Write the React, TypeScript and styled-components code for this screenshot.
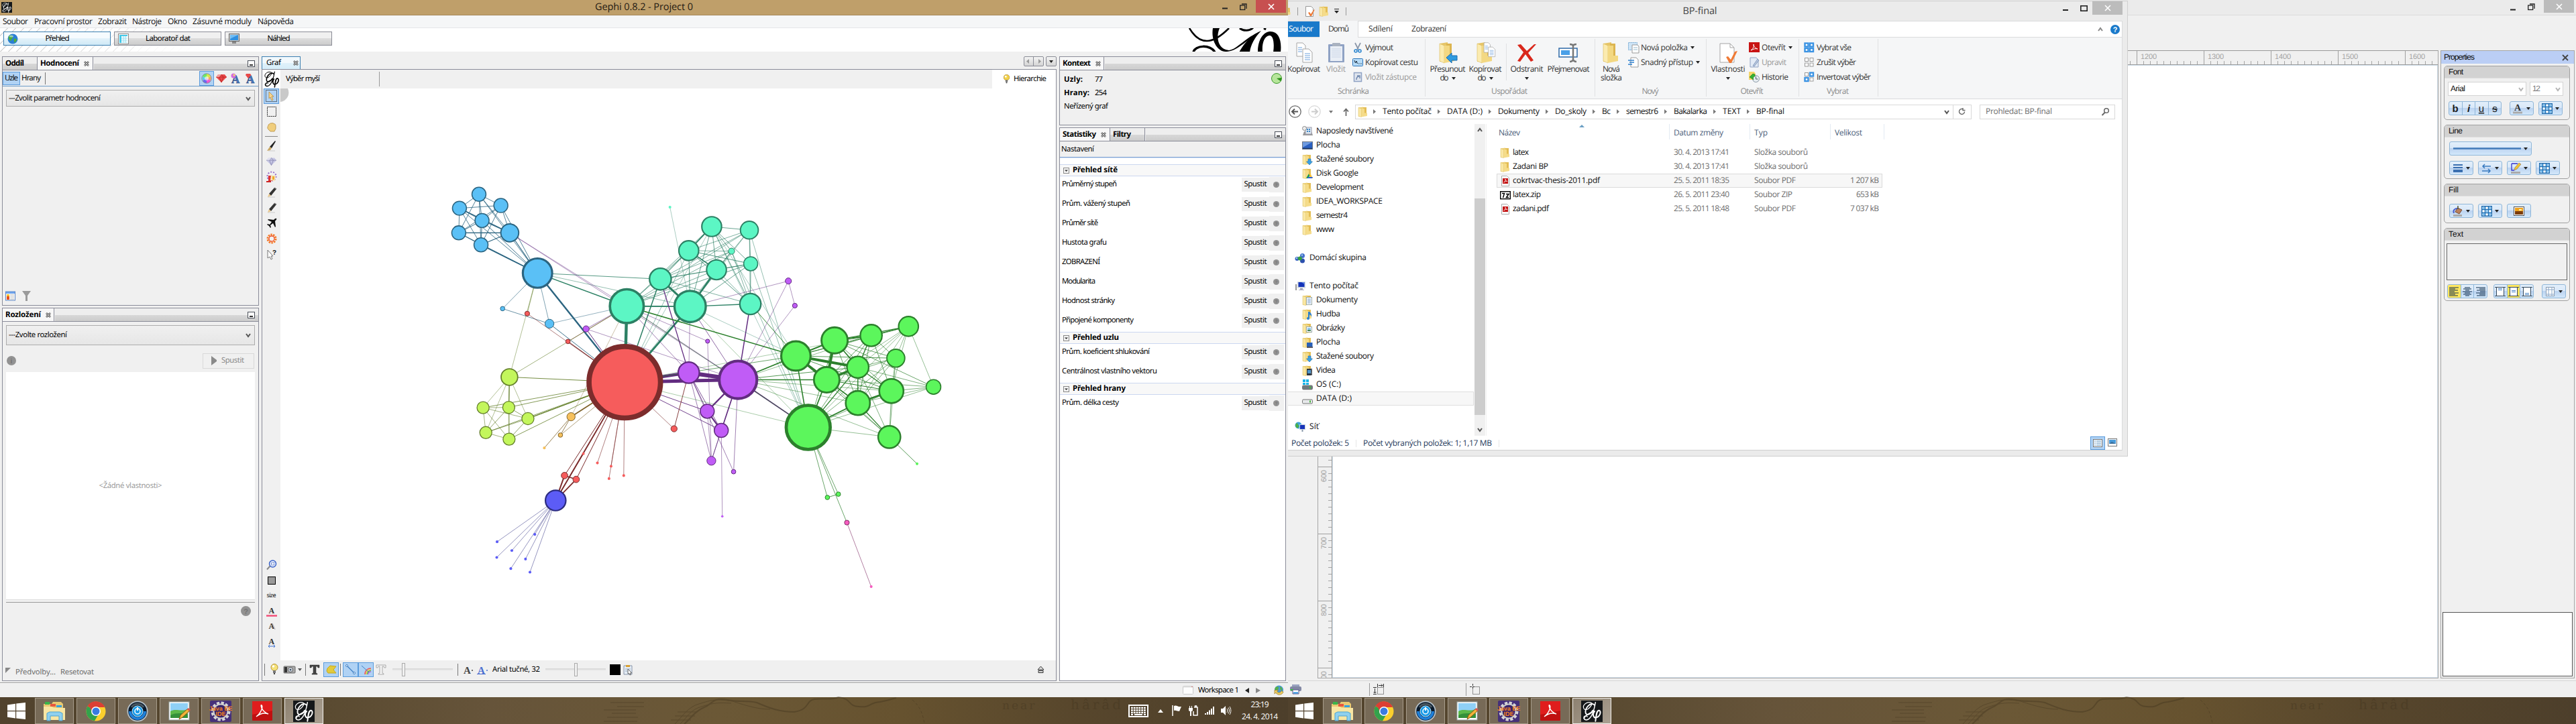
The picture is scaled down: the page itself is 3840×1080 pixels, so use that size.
import React, { useLayoutEffect, useRef, useState, ReactNode } from "react";
import styled, { createGlobalStyle, css } from "styled-components";

const TAHOMA = '"Noto Sans", "DejaVu Sans", sans-serif';
const SEGOE = '"Open Sans", "Noto Sans", sans-serif';
const ARIAL = '"Liberation Sans", Arial, sans-serif';

const Global = createGlobalStyle`
  * { box-sizing: border-box; }
  html, body { margin: 0; padding: 0; background: #f0f0f0; }
  body { width: 3840px; height: 1080px; overflow: hidden; font-family: ${SEGOE}; text-rendering: geometricPrecision; }
`;

/* ---------- text ---------- */

const LabelBox = styled.span<{ $c: string; $s: number; $f: string; $b?: boolean; $l: number; $w?: number }>`
  display: block;
  flex: none;
  white-space: pre;
  color: ${(p) => p.$c};
  font: ${(p) => (p.$b ? 700 : 400)} ${(p) => p.$s}px/1.2 ${(p) => p.$f};
  margin-left: ${(p) => p.$l}px;
  ${(p) => p.$w !== undefined && css`width: ${p.$w}px;`}
`;

type LabelProps = { children: string; w?: number; c?: string; s?: number; f?: string; b?: boolean; l?: number };

/* Tracks the text so that it fills the width it is given. */
function Label({ children, w, c = "#0c0c0c", s = 12, f = SEGOE, b, l = 0 }: LabelProps) {
  const ref = useRef<HTMLSpanElement>(null);
  const [spacing, setSpacing] = useState(0);
  useLayoutEffect(() => {
    const el = ref.current;
    if (!el || w === undefined || children.length < 2) return;
    const range = document.createRange();
    range.selectNodeContents(el);
    setSpacing((w - range.getBoundingClientRect().width) / (children.length - 1));
  }, []);
  return (
    <LabelBox ref={ref} $c={c} $s={s} $f={f} $b={b} $l={l} $w={w} style={{ letterSpacing: spacing }}>
      {children}
    </LabelBox>
  );
}

const Tah = (p: LabelProps) => <Label f={TAHOMA} s={11.3} c="#000" {...p} />;

/* ---------- icons ---------- */

const Svg = styled.svg<{ $l?: number | string }>`
  display: block;
  flex: none;
  margin-left: ${(p) => (typeof p.$l === "string" ? p.$l : `${p.$l || 0}px`)};
  overflow: visible;
`;

function Icon({ w = 16, h = 16, vb, l, children }: { w?: number; h?: number; vb?: string; l?: number | string; children: ReactNode }) {
  return (
    <Svg width={w} height={h} viewBox={vb || `0 0 ${w} ${h}`} $l={l} fill="none">
      {children}
    </Svg>
  );
}

const Script = ({ c }: { c: string }) => (
  <g stroke={c} strokeLinecap="round" fill="none">
    <path strokeWidth=".9" d="M12 3C7 0 1 5 3 9c2 3 7 0 9-5M4 21c-3-3 1-5 3-3" />
    <path strokeWidth="1.4" d="M15 5C10 1 4 9 5 14c1 3 5 2 8-3" />
    <path strokeWidth="1.1" d="M16 2c-1 6-3 16-8 19-2 1-4 1-5-1 2-4 8-7 12-8" />
    <path strokeWidth="1.5" d="M15 12c-3 4-1 8 2 7 4-1 6-7 3-8-3 0-3 6-4 12" />
  </g>
);

const GephiIcon = ({ s = 16 }: { s?: number }) => (
  <Icon w={s} h={s} vb="0 0 24 24">
    <rect width="24" height="24" fill="#15181a" />
    <Script c="#fff" />
  </Icon>
);

const Close = ({ l }: { l?: number }) => (
  <Icon w={8} h={8} l={l}>
    <path d="M1 1l6 6M7 1L1 7" stroke="#555" strokeWidth="2.6" />
    <path d="M1 1l6 6M7 1L1 7" stroke="#ddd" strokeWidth=".9" />
  </Icon>
);

const Minimize = () => (
  <Icon w={11} h={10}>
    <rect x=".5" y=".5" width="10" height="9" fill="#fff" stroke="#4a4f58" />
    <path d="M3 7h5" stroke="#333" strokeWidth="2" />
  </Icon>
);

const Chevron = ({ c = "#555", up, l }: { c?: string; up?: boolean; l?: number }) => (
  <Icon w={8} h={6} l={l}>
    <path d={up ? "M1 5l3-4 3 4" : "M1 1l3 4 3-4"} stroke={c} strokeWidth="2" />
  </Icon>
);

const Caret = ({ c = "#222", l, w = 6 }: { c?: string; l?: number; w?: number }) => (
  <Icon w={w} h={4} vb="0 0 6 4" l={l}>
    <path d="M0 0h6L3 4z" fill={c} />
  </Icon>
);

const Bulb = ({ c = "#f5e27a", w = 12, h = 17 }: { c?: string; w?: number; h?: number }) => (
  <Icon w={w} h={h} vb="0 0 12 17">
    <circle cx="6" cy="5.5" r="5" fill={c} stroke="#b8952e" />
    <path d="M4 10h4v4H4z" fill="#777" />
    <path d="M5 15h2" stroke="#444" strokeWidth="2" />
    <circle cx="4.5" cy="4" r="1.7" fill="#fff" />
  </Icon>
);

const HelpDot = ({ s = 15, t = "?" }: { s?: number; t?: string }) => (
  <Icon w={s} h={s} vb="0 0 15 15">
    <circle cx="7.5" cy="7.5" r="7.5" fill="#929292" />
    <text x="7.5" y="11.5" fontSize="11" fontWeight="700" textAnchor="middle" fill="#747474" fontFamily="Liberation Sans, sans-serif">{t}</text>
  </Icon>
);

const folderShape = (
  <>
    <path d="M1 1.500l7-1v14H1z" fill="#edcf73" />
    <path d="M8 1h5v13H8z" fill="#e3bd55" />
    <path d="M1 1.500l4.500 1.500v12.500L1 14.500z" fill="#f9e7a5" stroke="#d9b957" strokeWidth=".5" />
    <path d="M5.500 3H10v6.500h4V14l-8.500 1.500z" fill="#f5dc8a" />
  </>
);

function Folder({ kind, l, w = 16 }: { kind?: string; l?: number; w?: number }) {
  return (
    <Icon w={w} h={16} vb="0 0 16 16" l={l}>
      {folderShape}
      {kind === "down" && <path d="M9 7h4v4h2.500L11 16l-4.500-5H9z" fill="#3aa0e6" stroke="#1c6fb5" strokeWidth=".6" />}
      {kind === "drive" && <><path d="M10 8l-4 7h3l3-5z" fill="#159957" /><path d="M10 8h2l4 7h-3z" fill="#fbc02d" /><path d="M8 15h7l1-2H9z" fill="#2d62d6" /></>}
      {kind === "doc" && <><rect x="6.500" y="3.500" width="8" height="11" fill="#fff" stroke="#9aa" /><path d="M8 6h5M8 8h5M8 10h5M8 12h5" stroke="#7aa0cf" /></>}
      {kind === "music" && <path d="M9 4v8a2 2 0 1 0 2 2V8c2 1 3 2 2 4 3-3 0-6-2-8z" fill="#2b80d0" />}
      {kind === "image" && <><rect x="6.500" y="5.500" width="8" height="8" fill="#fff" stroke="#9aa" /><path d="M8 7h5v3H8z" fill="#8fc7ee" /><path d="M8 10h5v2H8z" fill="#49845b" /></>}
      {kind === "desk" && <><rect x="7" y="8" width="8.500" height="6" fill="#2860b8" /><path d="M7 15h9" stroke="#223" strokeWidth="1.500" /></>}
      {kind === "video" && <><rect x="7" y="5" width="8" height="10" fill="#2b3440" /><path d="M8 7h5v5H8z" fill="#4b94c9" /><path d="M14 6v9" stroke="#ddd" strokeDasharray="1 1" /></>}
    </Icon>
  );
}

const Pdf = () => (
  <Icon>
    <path d="M2.500.5h8l3 3v12h-11z" fill="#fff" stroke="#aaa" />
    <rect x="4" y="4" width="8" height="8" fill="#c31414" />
    <path d="M5.500 10c3-1 3-5 2.500-5s1 4 3 3.500c-2-.5-3 0-5.500 1.500z" stroke="#fff" strokeWidth=".7" />
  </Icon>
);

const Zip = () => (
  <Icon>
    <rect x=".7" y="2.700" width="14.600" height="11" fill="#fff" stroke="#000" strokeWidth="1.400" />
    <path d="M3 5.500h3.500L4.500 12M9 6.500h4l-3.500 5H13" stroke="#000" strokeWidth="1.500" />
  </Icon>
);

const Computer = () => (
  <Icon>
    <path d="M1 5h2v9H1z" fill="#999" />
    <rect x="4" y="1" width="12" height="10" fill="#d4dbe2" />
    <rect x="5.500" y="2" width="9" height="7" fill="#1534b8" />
    <path d="M10 2h4.500v3z" fill="#5d86e8" />
    <path d="M8 11h4v2h2v1H6v-1h2z" fill="#aab" />
  </Icon>
);

const Drive = ({ win }: { win?: boolean }) => (
  <Icon>
    {win && <path d="M1 0h4v4H1zM6 0h4v4H6zM1 5h4v3H1zM6 5h4v3H6z" fill="#19b5ea" />}
    <rect x=".5" y={9} width="15" height="6" rx="1.500" fill={win ? "#6e7a80" : "#e6e8ea"} stroke="#777" />
    <rect x="11" y="10.500" width="2" height="3" fill="#46b83e" />
  </Icon>
);

const navIcons: Record<string, ReactNode> = {
  recent: <Icon><path d="M3 8h11l2 6H1z" fill="#999" /><rect x="5" y="2" width="9" height="10" fill="#dfe8ef" stroke="#99a" /><path d="M7 5h2M10 5h2M7 8h2M10 8h2" stroke="#3b86c9" strokeWidth="2" /><circle cx="3.500" cy="3.500" r="3" fill="#eee" stroke="#888" /></Icon>,
  desktop: <Icon><rect x=".5" y="2.500" width="15" height="11" fill="#2b60c0" stroke="#6b7686" /><path d="M1 3h14L1 11z" fill="#6d9ae0" /><path d="M1 12.500h14" stroke="#223c6a" strokeWidth="1.500" /></Icon>,
  group: <Icon><circle cx="3.500" cy="9" r="3" fill="#3b64c4" /><circle cx="11.500" cy="4.500" r="3.500" fill="#4571ce" /><circle cx="11.500" cy="12" r="3.500" fill="#2c50ae" /><circle cx="7.800" cy="8.500" r="3" fill="#36a03d" /><circle cx="3" cy="8" r="1" fill="#cfe" /><circle cx="11" cy="3.500" r="1" fill="#cfe" /></Icon>,
  pc: <Computer />,
  net: <Icon><circle cx="5.500" cy="5.500" r="5" fill="#3da3d9" /><path d="M3 2c3 1 1 4 4 4L4 10C1 8 0 5 3 2z" fill="#4db045" /><rect x="7" y="4" width="9" height="8" fill="#c8d2de" /><rect x="8" y="5" width="7" height="6" fill="#1834b8" /><path d="M10.500 12h2v3h-2z" fill="#89a" /></Icon>,
  osdrive: <Drive win />,
  data: <Drive />,
};

/* ---------- network graph ---------- */

const palette: Record<string, [string, string]> = {
  b: ["#5ac0f6", "#2b6480"], t: ["#5cf6c4", "#2c8064"], v: ["#c05cf6", "#622c80"], r: ["#f65c5c", "#7c2c2c"],
  g: ["#5cf65c", "#2c802c"], l: ["#c3f65c", "#65802c"], o: ["#f6c05c", "#80642c"], i: ["#5c5cf6", "#2c2c80"], k: ["#f65cc0", "#802c64"],
};

type N = [string, number, number, number, string];
const nodes: N[] = [
  ["b1", 145, 122, 22, "b"], ["b2", 88, 173, 22, "b"], ["b3", 209, 163, 22, "b"], ["b4", 154, 218, 22, "b"], ["b5", 86, 263, 22, "b"],
  ["b6", 235, 263, 28, "b"], ["b7", 151, 307, 22, "b"], ["B", 316, 410, 46, "b"], ["b8", 214, 540, 7.5, "b"], ["b9", 351, 595, 14, "b"],
  ["t0", 703, 169, 4, "t"], ["t1", 825, 240, 31, "t"], ["t2", 935, 253, 28, "t"], ["t3", 758, 328, 31, "t"], ["t4", 883, 330, 10, "t"],
  ["t5", 939, 376, 22, "t"], ["t6", 839, 398, 31, "t"], ["t7", 675, 432, 34, "t"], ["T1", 577, 531, 53, "t"], ["T2", 762, 532, 49, "t"], ["t8", 938, 523, 33, "t"],
  ["v1", 1049, 439, 10, "v"], ["v2", 1068, 529, 8, "v"], ["v3", 813, 659, 7, "v"], ["v4", 458, 614, 10, "v"], ["v5", 758, 774, 33, "v"],
  ["V", 902, 800, 59, "v"], ["v6", 812, 915, 22, "v"], ["v7", 853, 985, 22, "v"], ["v8", 824, 1096, 14, "v"], ["v9", 889, 1136, 7.5, "v"], ["v10", 856, 1299, 3.5, "v"],
  ["R", 571, 809, 112, "r"], ["r1", 286, 558, 8, "r"], ["r2", 405, 660, 7.5, "r"], ["r3", 715, 979, 10, "r"], ["r4", 450, 1070, 4, "r"],
  ["r5", 395, 1150, 10.5, "r"], ["r6", 429, 1164, 10.5, "r"], ["r7", 491, 1104, 4, "r"], ["r8", 531, 1116, 4, "r"], ["r9", 525, 1161, 4, "r"], ["r10", 568, 1150, 4, "r"],
  ["l1", 234, 790, 26, "l"], ["l2", 157, 902, 19, "l"], ["l3", 232, 901, 19, "l"], ["l4", 288, 942, 19, "l"], ["l5", 165, 993, 19, "l"], ["l6", 233, 1017, 19, "l"],
  ["o1", 414, 935, 13, "o"], ["o2", 383, 1002, 7.5, "o"], ["o3", 336, 1049, 4, "o"],
  ["I", 369, 1241, 32, "i"], ["i1", 198, 1392, 4, "i"], ["i2", 308, 1365, 4, "i"], ["i3", 241, 1424, 4, "i"], ["i4", 197, 1449, 4, "i"],
  ["i5", 281, 1455, 4, "i"], ["i6", 238, 1490, 4, "i"], ["i7", 294, 1503, 4, "i"],
  ["g1", 1071, 713, 46, "g"], ["g2", 1184, 656, 41, "g"], ["g3", 1291, 638, 34, "g"], ["g4", 1400, 605, 31, "g"], ["g5", 1363, 721, 28, "g"],
  ["g6", 1252, 754, 34, "g"], ["g7", 1161, 800, 40, "g"], ["g8", 1350, 841, 38, "g"], ["g9", 1473, 826, 23, "g"], ["g10", 1252, 885, 38, "g"],
  ["G", 1107, 974, 69, "g"], ["g11", 1344, 1009, 35, "g"], ["g12", 1425, 1107, 4, "g"], ["g13", 1163, 1230, 7.5, "g"], ["g14", 1195, 1218, 7.5, "g"],
  ["k1", 1220, 1322, 8, "k"], ["k2", 1291, 1556, 4, "k"],
];

const byId = Object.fromEntries(nodes.map((n) => [n[0], n]));
const gx = (x: number) => 222 + x / 1.96;
const gy = (y: number) => 108 + y / 2.45;

/* "source target,target…:width:colour" */
const edgeSpec = [
  "b1 b2,b3,b4,b5,b6,b7,B:.8:b", "b2 b3,b4,b5,b6,b7,B:.8:b", "b3 b4,b5,b6,b7,B:.8:b", "b4 b5,b6,b7,B:.9:b", "b5 b6,b7,B:.9:b", "b6 b7,B:1.1:b", "b7 B:1.6:b", "b2 b6:1.3:b", "b5 b6:1.3:b",
  "B R:2.4:b", "B T1:1.5:t", "B t7:.8:t", "B T2:.5:t", "B b8,b9:.6:b", "b8 b9:.7:b", "b9 R:.9:b", "b9 T1:.5:b", "B r1:.6:l", "B l1:.5:l",
  "b6 T1:.5:v", "b6 V:.5:v", "r1 R:.6:r", "r2 R:1.1:r", "r2 T1:.6:r", "l1 T1:.6:l", "v4 R:1:v", "v4 T1:.6:v", "v4 V:.5:v",
  "t0 T2:.4:t", "t1 t2,t3,t4,t5,t6,t7,T2,T1,t8:.7:t", "t2 t3,t5,t6,t7,T2,t8,T1:.6:t", "t3 t5,t6,t7,T2,T1,t8:.8:t", "t4 t6,t7,T2,T1,t3,t8:.6:t",
  "t5 t6,t7,T2,t8,T1:.7:t", "t6 t7,T1,t8:.6:t", "t6 T2:2.6:t", "t7 T2:3:t", "t7 t8:.6:t", "T1 T2:1.8:t", "T2 t8:1.4:t", "t3 t6:1.4:t", "t3 t1:1.6:t",
  "T1 R:4.4:t", "T2 R:2.8:t", "t7 R:1.5:t", "t3 R:.5:t", "t6 R:.5:t", "t1 R:.4:t", "t8 V:1.5:v", "t7 v5:1.3:v", "T1 V:.6:v", "T1 v5:.6:v", "T2 V:.7:v", "T2 v5:.5:v",
  "T1 g1:1.5:g", "T1 G:.5:g", "T2 G:.4:g", "t1 g1:.4:t", "t2 G:.5:t", "t5 G:.5:t", "t4 G:.5:t", "t8 g1:.9:g", "T2 g1:.4:t", "t1 G:.4:t",
  "v1 T2,v2,V:.5:v", "v2 V:.5:v", "v3 T1,v8:.5:v",
  "R V:5:v", "R v5:4.5:v", "v5 V:6:v", "R v6:.9:v", "R v7:.9:v", "v5 v6,v7:.8:v", "v5 v8:.6:v", "v5 v9:.6:v", "v6 V:2.4:v", "v6 v7:2.2:v", "v7 V:1.6:v", "v6 v8:.5:v", "v7 v8:.8:v", "v9 V:.6:v", "v7 v10:.5:v", "V v8:.5:v", "V G:1.6:v",
  "v5 r3:.9:r", "R r3:.6:r",
  "R l1:.9:l", "R l2,l3,l4,l5,l6:.8:l", "R l4:1.3:l", "l1 l2,l3,l4,l5,l6:.5:l", "l1 l3:.9:l", "l2 l3,l4,l5,l6:.6:l", "l3 l4,l5,l6:.7:l", "l4 l5,l6:.7:l", "l5 l6:.6:l",
  "R o1:1.8:o", "R o2:.6:o", "o1 o2:.8:o", "o1 o3:.8:o", "T1 o1:.4:o",
  "R r4,r7,r8,r9,r10:.6:r", "R r5,r6:1:r", "R I:1.8:r", "r5 r6:1.6:r", "r5 I:2:r", "r6 I:1.8:r", "r4 I:1.2:r",
  "I i1,i2,i3,i4,i5,i6,i7:.5:i",
  "V g1:1.6:g", "V g2,g3:.5:g", "V g6:.8:g", "V g7:1.6:g", "V g10,g11,g8:.5:g", "V G:.6:g", "R g1:.7:g", "R g3:.4:g", "R G:.4:g",
  "g1 g2:2:g", "g1 g6:4:g", "g1 g7:3.6:g", "g1 g3,g4,g5,g8,g10,g11:.8:g", "g1 G:1.6:g",
  "g2 g3:2.2:g", "g2 g4:1.2:g", "g2 g6:1.6:g", "g2 g7:4:g", "g2 g5,g8,g9,g10,G:.7:g", "g3 g4:1.4:g", "g3 g5,g7,g8,g10,G:.7:g", "g3 g6:1.4:g",
  "g4 g5,g6,g7,g8,g9,g10,G:.5:g", "g5 g6,g7,g8,g10,G,g11:.6:g", "g6 g7:3.4:g", "g6 g8:1.2:g", "g6 g10:1.4:g", "g6 g9,g11:.6:g", "g6 G:1.3:g",
  "g7 g8:1:g", "g7 g10:1.6:g", "g7 G:1.8:g", "g7 g9,g11:.6:g", "g8 g9,g11,G:.6:g", "g8 g10:2.6:g", "g9 g10,G:.5:g", "g10 G:1.8:g", "g10 g11:1.2:g", "G g11:.5:g",
  "g11 g12:.8:g", "G g13:.7:g", "G g14:.7:g", "G k1:.7:g", "g13 g14:.8:g", "k1 k2:.6:k",
];

const edges = edgeSpec.flatMap((line) => {
  const [pair, width, colour] = line.split(":");
  const [from, targets] = pair.split(" ");
  return targets.split(",").map((to) => ({ from: byId[from], to: byId[to], width: Number(width), colour: palette[colour][1] }));
});

const Graph = () => (
  <Svg width={1156} height={853} viewBox="0 0 1156 853" fill="none">
    <path d="M0 0h11a14 14 0 0 1-11 20z" fill="#c9c9c9" />
    {edges.map((e, i) => (
      <line key={i} x1={gx(e.from[1])} y1={gy(e.from[2])} x2={gx(e.to[1])} y2={gy(e.to[2])} stroke={e.colour} strokeWidth={e.width} />
    ))}
    {nodes.map(([id, x, y, r, c]) => {
      const outer = r / 1.96;
      const sw = outer < 3 ? 0 : Math.max(1, outer * 0.135);
      return <circle key={id} cx={gx(x)} cy={gy(y)} r={outer - sw / 2} fill={palette[c][0]} stroke={palette[c][1]} strokeWidth={sw} />;
    })}
  </Svg>
);

/* ---------- shared frame ---------- */

const Desktop = styled.div`
  display: grid;
  grid-template-columns: 1920px 1920px;
  width: 3840px;
  height: 1080px;
  overflow: hidden;
`;
const Monitor = styled.div`
  position: relative;
  display: flex;
  flex-direction: column;
  height: 1080px;
  overflow: hidden;
`;
const Bar = styled.div`
  position: relative;
  display: flex;
  flex: none;
  align-items: center;
  height: 40px;
  background: linear-gradient(90deg, #51422d 0, #57482f 22%, #66543a 38%, #6b5836 56%, #66522f 70%, #57462c 84%, #4d3f2b 100%);
`;
const BarMap = styled.div`
  position: absolute;
  inset: 0;
  pointer-events: none;
`;
const TaskButton = styled.div<{ $active?: boolean }>`
  position: relative;
  display: flex;
  align-items: center;
  justify-content: center;
  width: 58px;
  height: 39px;
  margin: 1px 4px 0 0;
  border: 1px solid ${(p) => (p.$active ? "#f4f2ee" : "#a79c8b")};
  background: ${(p) => (p.$active ? "linear-gradient(135deg,#8d8170,#aaa092)" : "#776a57")};
`;
const Start = styled.div`
  position: relative;
  width: 52px;
  padding-left: 11px;
`;
const Tray = styled.div`
  position: relative;
  display: flex;
  align-items: center;
  margin-left: auto;
  width: 238px;
  height: 40px;
`;
const Clock = styled.div`
  display: flex;
  flex-direction: column;
  align-items: center;
  gap: 3px;
  width: 56px;
  margin-left: 15px;
`;

const taskIcons: ReactNode[] = [
  <Icon w={34} h={32}><path d="M1 5h12l2-3h12l3 3v23H1z" fill="#e9c971" /><path d="M3 2h7v4H3z" fill="#3bb54a" /><path d="M11 5h8v4h-8z" fill="#e6573f" /><path d="M20 7h8v3h-8z" fill="#35a0e0" /><path d="M1 9h12l3 2h17v18H1z" fill="#f8e6a3" /><path d="M6 30V19l4-2h15l4 2v11h-5v-7H11v7z" fill="#8fd0ee" stroke="#4ca3d0" /></Icon>,
  <Icon w={30} h={30}><circle cx="15" cy="15" r="14.500" fill="#fbcf2d" /><path d="M15 15L2.500 7.500A14.500 14.500 0 0 1 28 8.500H15z" fill="#dc3f34" /><path d="M15 15L2.500 7.500A14.500 14.500 0 0 0 13 29.300l6-10z" fill="#33a24c" /><path d="M4 5l6 13 5-9h13A14.500 14.500 0 0 0 4 5z" fill="#dc3f34" /><circle cx="15" cy="15" r="7" fill="#fff" /><circle cx="15" cy="15" r="5.500" fill="#3a7be0" /></Icon>,
  <Icon w={32} h={32}><circle cx="16" cy="16" r="15.500" fill="#b8c4cc" /><circle cx="16" cy="16" r="13.800" fill="#0a1a2c" /><path d="M5 16a11 11 0 0 0 22 0" stroke="#1e7fd8" strokeWidth="4" /><path d="M7 10a11 11 0 0 1 18 0" stroke="#48565f" strokeWidth="3" /><circle cx="16" cy="16" r="8" fill="#1b9ae6" stroke="#bfe9ff" /><circle cx="16" cy="16" r="4" stroke="#fff" strokeWidth="1.500" /><path d="M16 10v5" stroke="#fff" strokeWidth="2" /></Icon>,
  <Icon w={32} h={30}><rect x="1" y="1" width="30" height="27" fill="#fff" stroke="#9aa" /><path d="M3 3h26v13H3z" fill="#8fd0f6" /><path d="M3 15c8-5 14 1 26-3v13H3z" fill="#5cb84a" /><path d="M3 21c8-4 16-3 26-2v6H3z" fill="#35913a" /><path d="M16 27l2-6 11-10 3 3-11 10z" fill="#f3b43a" stroke="#8b5a14" /><path d="M28 12l2-2 3 3-2 2z" fill="#d9534f" /></Icon>,
  <Icon w={32} h={32}><rect width="32" height="32" rx="2" fill="#45307a" /><circle cx="16" cy="16" r="12" stroke="#d6d6d6" strokeWidth="5" strokeDasharray="4 2.300" /><circle cx="16" cy="16" r="10.500" fill="#39246b" stroke="#ccc" strokeWidth="2" /><text x="16" y="15" fontSize="9" fontWeight="700" textAnchor="middle" fill="#f58220" fontFamily="Liberation Sans, sans-serif">Java EE</text><text x="16" y="23" fontSize="9" fontWeight="700" textAnchor="middle" fill="#f58220" fontFamily="Liberation Sans, sans-serif">IDE</text></Icon>,
  <Icon w={30} h={30}><rect width="30" height="29" rx="1" fill="#c01010" /><path d="M0 0h30v14L0 20z" fill="#e01d1d" /><path d="M6 23C14 17 16 8 14 6s-1 9 10 13c-6-2-13 0-18 4z" stroke="#fff" strokeWidth="1.500" /></Icon>,
  <GephiIcon s={32} />,
];

const trayIcon = {
  keyboard: <Icon w={30} h={19}><rect x="1" y="1" width="28" height="17" fill="#4d3f2b" stroke="#fff" strokeWidth="2" /><path d="M4 5h22M4 8.500h22M4 12h22" stroke="#fff" strokeWidth="2.300" strokeDasharray="2.800 1" /><path d="M4 15h3M9 15h12M23 15h3" stroke="#fff" strokeWidth="2" /></Icon>,
  up: <Icon w={8} h={5} l={14}><path d="M0 5l4-5 4 5z" fill="#fff" /></Icon>,
  flag: <Icon w={15} h={16} l={13}><path d="M1 0v16" stroke="#fff" strokeWidth="1.500" /><path d="M3 1c4-2 5 2 11 1l-3 7c-3 0-5-2-8-1z" fill="#fff" /></Icon>,
  battery: <Icon w={14} h={16} l={10}><path d="M0 4h6v3c0 2-2 2-2 2v7H2V9S0 9 0 7zM1 1h1v3H1zM4 1h1v3H4z" fill="#fff" /><path d="M8 3h5v12H7V9M9.500 3V1h2v2" stroke="#fff" strokeWidth="1.500" /></Icon>,
  signal: <Icon w={16} h={13} l={9}><path d="M1 10h2v2H1zM4 8h2v4H4zM7 5.500h2V12H7zM10 3h2v9h-2zM13 0h2v12h-2z" fill="#fff" /></Icon>,
  sound: <Icon w={15} h={14} l={9}><path d="M0 4h3l4-4v14l-4-4H0z" fill="#fff" /><path d="M9 4c1 2 1 4 0 6M11 2.500c2 3 2 6 0 9M13 1c2.500 4 2.500 8 0 12" stroke="#fff" /></Icon>,
};

function Taskbar({ tray }: { tray?: boolean }) {
  return (
    <Bar>
      <BarMap>
        <Svg width={1920} height={40} viewBox="0 0 1920 40" fill="none" stroke="#43351f" opacity=".42">
          <path d="M1020 40c10-8 14-18 28-24 16-6 12-16 36-12 20 4 26 0 44 4 18 8 34 14 56 14 24-4 16-16 30-19 16-2 24 2 36-3 20 2 14 14 30 14 20 2 14-6 32-7 12-2 16-4 24-6" strokeWidth="2" />
          <path d="M1006 40c10-10 20-26 36-30 20-6 24-8 50-4 24 8 40 12 56 12M1014 40c10-10 16-22 32-26 18-6 26-6 44-5" />
          <path d="M910 8h50M920 14h40M900 19h48M912 24h36M905 30h46M900 36h50M1010 22h30M1006 28h30M1000 34h30" />
          <path d="M1360 4c12 10 16 22 18 36" strokeDasharray="4 3" />
          <text x="1494" y="18" fontSize="17" letterSpacing="3" fill="#43351f" stroke="none" fontFamily="DejaVu Serif, serif">near</text>
          <text x="1596" y="18" fontSize="20" letterSpacing="4" fill="#43351f" stroke="none" fontFamily="DejaVu Serif, serif">hârâd</text>
        </Svg>
      </BarMap>
      <Start>
        <Icon w={27} h={25}><path d="M0 3.500l12-1.800V12H0zM13.200 1.500L27 0v12H13.200zM0 13.200h12v10.300L0 21.700zM13.200 13.200H27V25l-13.800-1.600z" fill="#fff" /></Icon>
      </Start>
      {taskIcons.map((icon, i) => (
        <TaskButton key={i} $active={i === 6}>{icon}</TaskButton>
      ))}
      {tray && (
        <Tray>
          {trayIcon.keyboard}{trayIcon.up}{trayIcon.flag}{trayIcon.battery}{trayIcon.signal}{trayIcon.sound}
          <Clock>
            <Label w={27} c="#fff">23:19</Label>
            <Label w={54} c="#fff">24. 4. 2014</Label>
          </Clock>
        </Tray>
      )}
    </Bar>
  );
}

/* ---------- Gephi ---------- */

const GephiWindow = styled.div`
  display: flex;
  flex-direction: column;
  height: 1040px;
  background: #f0f0f0;
`;
const GephiTitle = styled.div`
  display: grid;
  grid-template-columns: 200px 1fr 200px;
  justify-items: center;
  align-items: center;
  flex: none;
  height: 23px;
  background: #bf9f6a;
  border-bottom: 1px solid #a5875a;
`;
const TitleIcon = styled.div`
  justify-self: start;
  padding-left: 2px;
`;
const WindowButtons = styled.div`
  display: flex;
  justify-self: end;
  align-self: start;
  align-items: center;
  height: 19px;
  margin-right: 3px;
  gap: 10px;
`;
const CloseButton = styled.div<{ $bg: string; $h?: number; $l?: number }>`
  display: flex;
  align-items: center;
  justify-content: center;
  width: 45px;
  height: ${(p) => p.$h || 19}px;
  margin-left: ${(p) => p.$l ?? 3}px;
  background: ${(p) => p.$bg};
`;
const MenuBar = styled.div`
  display: flex;
  align-items: center;
  flex: none;
  height: 19px;
  padding-left: 4px;
  background: #f5f6f7;
  border-bottom: 1px solid #e4e6e9;
`;
const Banner = styled.div`
  display: flex;
  flex: none;
  gap: 5px;
  height: 35px;
  padding: 5px 9px 0 5px;
  background: linear-gradient(90deg, rgba(255, 255, 255, 0.1), #fff 300px),
    repeating-linear-gradient(135deg, #fff 0, #fff 7.5px, #d2d2d2 7.5px, #d2d2d2 8.5px);
`;
const ModeButton = styled.div<{ $on?: boolean }>`
  display: grid;
  grid-template-columns: 24px 1fr 24px;
  align-items: center;
  justify-items: center;
  width: 160px;
  height: 21px;
  padding-left: 1px;
  border: 1px solid ${(p) => (p.$on ? "#3c7fb1" : "#8a8c96")};
  background: ${(p) => (p.$on ? "linear-gradient(#f6fbfe 45%,#e3f2fa 50%,#cfe9f6)" : "linear-gradient(#f0f0f0 45%,#dcdcdc 50%,#cccccc)")};
`;
const BigLogo = styled.div`
  margin: -5px 0 0 auto;
  height: 35px;
  overflow: hidden;
`;
const WorkArea = styled.div`
  display: grid;
  grid-template-columns: 383px 1185px 338px;
  column-gap: 4px;
  flex: none;
  height: 941px;
  padding: 7px 3px 2px;
`;
const Column = styled.div`
  display: flex;
  flex-direction: column;
  gap: 3px;
  min-width: 0;
`;
const Dock = styled.div<{ $h: number; $white?: boolean }>`
  display: flex;
  flex-direction: column;
  height: ${(p) => p.$h}px;
  border: 1px solid #8a8c99;
  background: ${(p) => (p.$white ? "#fff" : "#f0f0f0")};
`;
const DockHead = styled.div`
  display: flex;
  flex: none;
  height: 20px;
  border-bottom: 1px solid #8a8c99;
  background: #f0f0f0;
`;
const DockTab = styled.div<{ $w: number; $on?: boolean }>`
  display: flex;
  align-items: center;
  width: ${(p) => p.$w}px;
  padding-left: 4px;
  border-right: 1px solid #8a8c99;
  background: ${(p) => (p.$on ? "#f7f7f7" : "linear-gradient(#eee 50%,#d8d8d8 52%,#ccc)")};
`;
const DockFill = styled.div`
  display: flex;
  flex: 1;
  align-items: center;
  justify-content: flex-end;
  margin-left: 1px;
  padding-right: 5px;
  background: linear-gradient(#eee 50%, #d8d8d8 52%, #ccc);
`;
const RankBar = styled.div`
  display: flex;
  align-items: center;
  flex: none;
  height: 24px;
  border-bottom: 1px solid #6f9dc8;
`;
const Toggle = styled.div<{ $w: number; $h: number; $on?: boolean; $l?: number }>`
  display: flex;
  flex: none;
  align-items: center;
  justify-content: center;
  width: ${(p) => p.$w}px;
  height: ${(p) => p.$h}px;
  margin-left: ${(p) => p.$l || 0}px;
  border: 1px solid ${(p) => (p.$on ? "#5a9bdc" : "transparent")};
  background: ${(p) => (p.$on ? "#b0d2f4" : "transparent")};
`;
const VLine = styled.div<{ $h: number; $l?: number; $c?: string; $t?: number }>`
  flex: none;
  width: 1px;
  height: ${(p) => p.$h}px;
  margin-left: ${(p) => p.$l || 0}px;
  margin-top: ${(p) => p.$t || 0}px;
  background: ${(p) => p.$c || "#777"};
`;
const Combo = styled.div<{ $h: number; $t: number }>`
  display: flex;
  align-items: center;
  justify-content: space-between;
  flex: none;
  height: ${(p) => p.$h}px;
  margin: ${(p) => p.$t}px 5px 0;
  padding: 0 5px 0 3px;
  border: 1px solid #acacac;
  background: linear-gradient(#f0f0f0, #e6e6e6);
`;
const PanelFoot = styled.div`
  display: flex;
  align-items: center;
  gap: 9px;
  margin: auto 0 5px 4px;
`;
const RunRow = styled.div`
  display: flex;
  align-items: center;
  justify-content: space-between;
  height: 24px;
  margin: 11px 6px 5px;
`;
const RunButton = styled.div`
  display: flex;
  align-items: center;
  gap: 7px;
  width: 77px;
  height: 23px;
  padding-left: 12px;
  border: 1px solid #d9d9d9;
`;
const PropertySheet = styled.div`
  display: flex;
  align-items: center;
  justify-content: center;
  height: 340px;
  margin: 0 5px;
  background: #fff;
  border-bottom: 1px solid #ddd;
`;
const HelpRow = styled.div`
  display: flex;
  justify-content: flex-end;
  margin: 3px 5px 0;
  padding: 5px 6px 0 0;
  border-top: 1px solid #999;
`;

const GraphTabs = styled.div`
  display: flex;
  align-items: flex-start;
  flex: none;
  height: 19px;
`;
const GraphTab = styled.div`
  display: flex;
  align-items: center;
  width: 58px;
  height: 19px;
  padding-left: 6px;
  border: 1px solid #3c7fb1;
  border-bottom: 0;
  background: linear-gradient(#f2f9fd 50%, #dff1fa 52%, #d6edf9);
`;
const NavButton = styled.div<{ $w: number; $l?: string }>`
  display: flex;
  align-items: center;
  justify-content: space-around;
  width: ${(p) => p.$w}px;
  height: 15px;
  margin-left: ${(p) => p.$l || "3px"};
  border: 1px solid #8a8c96;
  border-radius: 2px;
  background: linear-gradient(#f4f4f4, #d4d4d4);
`;
const GraphBody = styled.div`
  display: flex;
  flex-direction: column;
  height: 913px;
  margin-top: -3px;
  border: 1px solid #8a8c99;
`;
const GraphTop = styled.div`
  display: flex;
  align-items: center;
  flex: none;
  height: 28px;
`;
const ScriptTile = styled.div`
  width: 27px;
  height: 28px;
  padding: 1px 0 0 1px;
  background: #fff;
`;
const Hierarchy = styled.div`
  display: flex;
  align-items: center;
  width: 95px;
  height: 28px;
  margin-left: auto;
  padding-left: 16px;
  background: #fff;
`;
const GraphMiddle = styled.div`
  display: grid;
  grid-template-columns: 27px 1fr;
  flex: none;
  height: 853px;
`;
const Tools = styled.div`
  display: flex;
  flex-direction: column;
  align-items: center;
  justify-content: space-between;
  padding-bottom: 16px;
`;
const ToolGroup = styled.div`
  display: flex;
  flex-direction: column;
  align-items: center;
`;
const ToolRule = styled.div`
  width: 19px;
  height: 1px;
  margin: 2px 0;
  background: #888;
`;
const Canvas = styled.div`
  background: #fff;
  overflow: hidden;
`;
const GraphBottom = styled.div`
  display: flex;
  align-items: center;
  height: 28px;
  padding: 0 18px 1px 3px;
`;
const Slider = styled.div<{ $l: number; $at: number }>`
  display: flex;
  align-items: center;
  width: 90px;
  height: 20px;
  margin-left: ${(p) => p.$l}px;
  padding-left: ${(p) => p.$at}px;
  background: linear-gradient(#d6d6d6, #e8e8e8) center / 100% 3px no-repeat;
`;
const Thumb = styled.div`
  width: 5px;
  height: 20px;
  border: 1px solid #aaa;
  background: #f0f0f0;
`;
const BlackSwatch = styled.div`
  width: 16px;
  height: 16px;
  margin: 0 3px 0 6px;
  background: #000;
`;

const ContextBody = styled.div`
  display: grid;
  grid-template-columns: 309px 16px;
  padding: 4px 0 0 6px;
`;
const ContextRow = styled.div`
  display: flex;
  align-items: center;
  height: 20px;
`;
const SettingsRow = styled.div`
  display: flex;
  align-items: center;
  flex: none;
  height: 24px;
  margin-bottom: 10px;
  padding-left: 2px;
  background: #f0f0f0;
  border-bottom: 1px solid #7c9fd0;
  box-shadow: 0 1px 0 #d3e2f7;
`;
const Section = styled.div`
  display: flex;
  align-items: center;
  flex: none;
  height: 18px;
  padding-left: 5px;
  border-top: 1px solid #cbd7f0;
  border-bottom: 1px solid #cbd7f0;
  background: #f8f8f8;
`;
const StatRow = styled.div`
  display: grid;
  grid-template-columns: 1fr 41px 22px;
  align-items: center;
  height: 29px;
  padding: 0 2px 5px 3px;
`;
const StatRun = styled.div`
  display: flex;
  align-items: center;
  justify-content: center;
  height: 21px;
  background: #f0f0f0;
`;
const StatHelp = styled(StatRun)`
  height: 23px;
  padding-right: 1px;
`;
const GephiStatus = styled.div`
  display: flex;
  align-items: center;
  justify-content: flex-end;
  height: 22px;
  padding-right: 6px;
  border-top: 1px solid #999;
  box-shadow: inset 0 1px 0 #fff;
`;

const menu: [string, number, number][] = [
  ["Soubor", 38, 0], ["Pracovní prostor", 87, 9], ["Zobrazit", 43, 8], ["Nástroje", 44, 8], ["Okno", 29, 9], ["Zásuvné moduly", 88, 8], ["Nápověda", 54, 9],
];

const letterA = (c: string) => <text x="1" y="15" fontSize="17" fontWeight="700" fill={c} stroke="#27457c" strokeWidth=".6" fontFamily="Liberation Serif, serif">A</text>;
const Gem = ({ c = "#e84a4a", d = "#b22", w = 16 }: { c?: string; d?: string; w?: number }) => (
  <Icon w={w} h={14} vb="0 0 16 14"><path d="M3 1h10l3 4-8 8-8-8z" fill={c} /><path d="M0 5h16M5 5l3 8 3-8-3-4z" stroke={d} strokeWidth=".8" /><path d="M3 1h5L5 5H0z" fill="#fff" opacity=".45" /></Icon>
);
const Pencil = () => (
  <Icon><path d="M2 15h11" stroke="#ccc" /><path d="M4 10L12 1l3 2-8 10z" fill="#333" /><path d="M4 10l3 3-5 2z" fill="#e8c68a" /><path d="M12 1l3 2" stroke="#777" strokeWidth="1.500" /></Icon>
);

const tools: ReactNode[] = [
  <Icon w={17} h={19}><rect x=".5" y=".5" width="16" height="17" stroke="#111" strokeDasharray="1 1" /><path d="M5 3l7 7H9l2 5-2 1-2-5-2 2z" fill="#f7d38b" stroke="#b98c3c" strokeWidth=".8" /></Icon>,
  <Icon w={14} h={15}><rect x=".5" y=".5" width="13" height="14" stroke="#222" strokeDasharray="2 1" /></Icon>,
  <Icon w={14} h={14}><path d="M2 4c0-2 2-2 2-2s1-2 3-1c2-1 3 0 3 1 2-1 3 1 3 3v4l-2 4H5L2 10C0 8 1 6 2 4z" fill="#f0ce7d" stroke="#b58d3d" strokeWidth=".8" /></Icon>,
  <Icon><path d="M3 15h10" stroke="#ccc" /><path d="M5 9L13 0l1 1-6 10z" fill="#222" /><path d="M5 9l3 2-2 3-5 1z" fill="#c9a765" /></Icon>,
  <Gem c="#c6c6e4" d="#8080a8" w={15} />,
  <Icon><circle cx="8" cy="7" r="6.500" stroke="#9b6fc9" strokeWidth="2" strokeDasharray="2 2" /><path d="M3 6h7v8H3z" fill="#d33" /><path d="M7 5l7 1-1 8-7-1z" fill="#f4e6b8" /><path d="M9 7h3v5H9z" fill="#f0a92d" /><path d="M0 15h7" stroke="#c22" strokeWidth="2" /></Icon>,
  <Pencil />,
  <Pencil />,
  <Icon><path d="M15 1c-1-1-3 1-4 2L3 2 2 3l6 3-3 4-3-1-1 1 3 2 2 3 1-1-1-3 4-3 3 6 1-1-1-8c1-1 3-3 2-4z" fill="#111" /></Icon>,
  <Icon><circle cx="8" cy="8" r="6" stroke="#f47b2a" strokeWidth="3" strokeDasharray="2.400 1.300" /><circle cx="8" cy="8" r="3" fill="#f0f0f0" /><circle cx="8" cy="8" r="4" stroke="#f04e23" strokeWidth="1.300" /></Icon>,
  <Icon><path d="M2 2v12l3-2 2 4 2-1-2-4h3z" fill="#fff" stroke="#777" /><text x="9" y="9" fontSize="10" fontWeight="700" fill="#222" fontFamily="Liberation Sans, sans-serif">?</text></Icon>,
];

const serifA = (c: string, extra?: ReactNode) => (
  <Icon><text x="3.500" y="11" fontSize="12" fontWeight="700" fill={c} fontFamily="Liberation Serif, serif">A</text>{extra}</Icon>
);

const lowerTools: ReactNode[] = [
  <Icon><circle cx="9.500" cy="6" r="5" fill="#eaf1ff" stroke="#3a62c8" strokeWidth="1.500" /><rect x="7.500" y="4" width="4" height="4" stroke="#2748a8" strokeDasharray="1 1" /><path d="M5.500 9.500L1 14.500" stroke="#888" strokeWidth="2" /></Icon>,
  <Icon w={12} h={12}><rect x=".5" y=".5" width="11" height="11" fill="#999" stroke="#000" /></Icon>,
  <Label w={14} s={9} f={TAHOMA}>size</Label>,
  serifA("#333", <path d="M0 14.500h16" stroke="#f2517a" strokeWidth="2.500" />),
  serifA("#333", <path d="M9 3l4 9" stroke="#bbb" strokeWidth="1.500" />),
  serifA("#333", <path d="M3 14h10M5 12l-2 2 2 2M11 12l2 2-2 2" stroke="#3a6fd0" />),
];

const stats: [string, number, [string, number][]][] = [
  ["Přehled sítě", 67, [["Průměrný stupeň", 82], ["Prům. vážený stupeň", 102], ["Průměr sítě", 54], ["Hustota grafu", 67], ["ZOBRAZENÍ", 57], ["Modularita", 50], ["Hodnost stránky", 79], ["Připojené komponenty", 107]]],
  ["Přehled uzlu", 69, [["Prům. koeficient shlukování", 131], ["Centrálnost vlastního vektoru", 142]]],
  ["Přehled hrany", 79, [["Prům. délka cesty", 85]]],
];

function Gephi() {
  return (
    <GephiWindow>
      <GephiTitle>
        <TitleIcon><GephiIcon s={16} /></TitleIcon>
        <Label w={146} s={14.5} c="#1f1a12">Gephi 0.8.2 - Project 0</Label>
        <WindowButtons>
          <Icon w={8} h={8}><path d="M0 6.500h8" stroke="#222" strokeWidth="2" /></Icon>
          <Icon w={11} h={10} l={8}><rect x=".7" y="3" width="7" height="6.500" stroke="#222" strokeWidth="1.300" /><path d="M3 1h7v7" stroke="#222" strokeWidth="1.300" /></Icon>
          <CloseButton $bg="#c75050"><Icon w={8} h={8}><path d="M0 0l8 8M8 0L0 8" stroke="#fff" strokeWidth="1.700" /></Icon></CloseButton>
        </WindowButtons>
      </GephiTitle>
      <MenuBar>{menu.map(([t, w, l]) => <Label key={t} w={w} l={l}>{t}</Label>)}</MenuBar>
      <Banner>
        <ModeButton $on>
          <Icon><circle cx="8" cy="8" r="7.500" fill="#2a7fd4" /><path d="M2 4c4-3 7-1 6 2s-3 2-2 5C3 11 1 8 2 4zM10 8c2-1 4 0 4 2l-3 4c-1-2-2-4-1-6z" fill="#4fae3c" /><ellipse cx="6" cy="4" rx="3" ry="1.500" fill="#cfe8ff" opacity=".6" /></Icon>
          <Tah w={36} s={11.5}>Přehled</Tah>
        </ModeButton>
        <ModeButton>
          <Icon><rect x=".5" y=".5" width="15" height="15" fill="#fff" stroke="#888" /><path d="M2 2h12v2H2zM2 4h3v10H2z" fill="#46c8e8" /><path d="M5 7h9M5 10h9M5 13h9M8 4v10M11 4v10" stroke="#9adff0" /></Icon>
          <Tah w={67} s={11.5}>Laboratoř dat</Tah>
        </ModeButton>
        <ModeButton>
          <Icon><rect x=".5" y=".5" width="15" height="11" fill="#ccc" stroke="#666" /><rect x="2" y="2" width="12" height="8" fill="#2f8fe0" /><path d="M2 2h12L2 8z" fill="#6fbcf4" /><path d="M5 12h6v3H5z" fill="#888" /></Icon>
          <Tah w={34} s={11.5}>Náhled</Tah>
        </ModeButton>
        <BigLogo>
          <Icon w={139} h={35}>
            <path d="M1 0C8 12 16 19 27 19S50 10 60 0" stroke="#000" strokeWidth="2.600" />
            <path d="M7 36C9 25 33 24 39 36" stroke="#000" strokeWidth="3.500" />
            <path d="M36 0C33 17 42 36 57 35C74 34 90 14 106 6C86 12 72 32 60 33C44 32 40 14 46 0z" fill="#000" />
            <path d="M75 36C83 22 94 9 108 4C98 14 92 26 91 36z" fill="#000" />
            <path d="M76 0C82 5 92 4 96 -1M112 0l3 2" stroke="#000" strokeWidth="3" />
            <path d="M103 36C103 16 112 5 122 5C134 5 139 18 137 36H126C128 22 126 10 120 11C112 12 109 24 110 36z" fill="#000" />
          </Icon>
        </BigLogo>
      </Banner>
      <WorkArea>
        <Column>
          <Dock $h={372}>
            <DockHead>
              <DockTab $w={52}><Tah b w={28} s={11.5}>Oddíl</Tah></DockTab>
              <DockTab $w={83} $on><Tah b w={58} s={11.5}>Hodnocení</Tah><Close l={7} /></DockTab>
              <DockFill><Minimize /></DockFill>
            </DockHead>
            <RankBar>
              <Toggle $w={26} $h={20} $on><Label w={20} f={TAHOMA} s={11.5}>Uzle</Label></Toggle>
              <Label w={29} l={2} f={TAHOMA} s={11.5}>Hrany</Label>
              <VLine $h={18} $l={6} />
              <Toggle $w={22} $h={22} $on $l={229}>
                <Icon><circle cx="8" cy="8" r="7" fill="#ddd" /><path d="M8 8V1a7 7 0 0 1 6 4z" fill="#d7e84a" /><path d="M8 8l6-3a7 7 0 0 1 0 6z" fill="#f5a95a" /><path d="M8 8l6 3a7 7 0 0 1-6 4z" fill="#f05ad0" /><path d="M8 8v7a7 7 0 0 1-6-4z" fill="#6a6af0" /><path d="M8 8l-6 3a7 7 0 0 1 0-6z" fill="#5ac8f0" /><path d="M8 8L2 5a7 7 0 0 1 6-4z" fill="#6ae86a" /><circle cx="8" cy="8" r="3" fill="#fff" opacity=".6" /><circle cx="8" cy="8" r="7.200" stroke="#666" strokeWidth=".6" /></Icon>
              </Toggle>
              <Toggle $w={22} $h={22}><Gem /></Toggle>
              <Toggle $w={22} $h={22}><Icon>{letterA("#4a7cc4")}<circle cx="4" cy="4" r="3.500" fill="#d66ae0" /><circle cx="5" cy="3" r="1.500" fill="#f0e060" /></Icon></Toggle>
              <Toggle $w={22} $h={22}><Icon>{letterA("#4a7cc4")}<path d="M1 1h6l1.500 2L4 8 0 3z" fill="#e84a4a" /></Icon></Toggle>
            </RankBar>
            <Combo $h={25} $t={5}><Label f={TAHOMA} s={11.5} w={137}>---Zvolit parametr hodnocení</Label><Chevron /></Combo>
            <PanelFoot>
              <Icon><rect x=".5" y="1" width="14" height="13" fill="#fff" stroke="#5a84c4" /><path d="M1 1h13v3H1z" fill="#6ba0e8" /><path d="M2 5h4v3H2z" fill="#f7c02d" /><path d="M2 8h4v5H2z" fill="#e8501e" /><path d="M7 6h6M7 9h6M7 12h6" stroke="#aaa" /></Icon>
              <Icon><path d="M0 0h13L8 7v8H5V7z" fill="#9a9a9a" /></Icon>
            </PanelFoot>
          </Dock>
          <Dock $h={557}>
            <DockHead>
              <DockTab $w={77} $on><Tah b w={53} s={11.5}>Rozložení</Tah><Close l={7} /></DockTab>
              <DockFill><Minimize /></DockFill>
            </DockHead>
            <Combo $h={30} $t={5}><Tah w={87}>---Zvolte rozložení</Tah><Chevron /></Combo>
            <RunRow>
              <HelpDot s={14} t="i" />
              <RunButton><Icon w={8} h={14}><path d="M0 0l8 6v2l-8 6z" fill="#8a8a8a" /></Icon><Tah w={34} c="#8a8a8a">Spustit</Tah></RunButton>
            </RunRow>
            <PropertySheet><Tah w={94} c="#9c9c9c">{"<Žádné vlastnosti>"}</Tah></PropertySheet>
            <HelpRow><HelpDot /></HelpRow>
            <PanelFoot>
              <Icon w={8} h={14}><path d="M0 0h8L0 8z" fill="#888" /></Icon>
              <Tah w={60} c="#6d6d6d" l={-2}>Předvolby...</Tah>
              <Tah w={50} c="#6d6d6d" l={-2}>Resetovat</Tah>
            </PanelFoot>
          </Dock>
        </Column>
        <Column>
          <GraphTabs>
            <GraphTab><Tah w={22} s={11.5}>Graf</Tah><Close l={18} /></GraphTab>
            <NavButton $w={30} $l="auto">
              <Icon w={4} h={7}><path d="M4 0v7L0 3.500z" fill="#999" /></Icon><VLine $h={13} $c="#8a8c96" /><Icon w={4} h={7}><path d="M0 0v7l4-3.500z" fill="#999" /></Icon>
            </NavButton>
            <NavButton $w={16}><Caret w={8} /></NavButton>
          </GraphTabs>
          <GraphBody>
            <GraphTop>
              <ScriptTile><Icon w={25} h={26} vb="0 0 23 24"><Script c="#000" /></Icon></ScriptTile>
              <Tah w={51} l={8}>Výběr myší</Tah>
              <VLine $h={22} $l={88} $c="#999" />
              <Hierarchy><Bulb c="#f3d24a" w={11} h={14} /><Tah w={49} l={5}>Hierarchie</Tah></Hierarchy>
            </GraphTop>
            <GraphMiddle>
              <Tools>
                <ToolGroup>
                  {tools.map((t, i) => (
                    <React.Fragment key={i}>
                      <Toggle $w={23} $h={23} $on={i === 0}>{t}</Toggle>
                      {i === 2 && <ToolRule />}
                    </React.Fragment>
                  ))}
                </ToolGroup>
                <ToolGroup>{lowerTools.map((t, i) => <Toggle key={i} $w={23} $h={23}>{t}</Toggle>)}</ToolGroup>
              </Tools>
              <Canvas><Graph /></Canvas>
            </GraphMiddle>
            <GraphBottom>
              <VLine $h={18} />
              <Toggle $w={24} $h={22} $l={2}><Bulb /></Toggle>
              <Icon w={17} h={12} l={2}><rect y="1" width="17" height="10" rx="1" fill="#aaa" stroke="#666" /><rect x="1" y="2" width="4" height="8" fill="#333" /><circle cx="10" cy="6" r="3.500" fill="#dfe5ef" stroke="#555" /><circle cx="10" cy="6" r="1.500" fill="#456" /></Icon>
              <Caret l={4} c="#555" />
              <VLine $h={18} $l={5} />
              <Toggle $w={26} $h={22}><Icon><path d="M1 1h14v4h-2l-1-2h-2v10l2 1v1H4v-1l2-1V3H4L3 5H1z" fill="#444" stroke="#222" strokeWidth=".5" /></Icon></Toggle>
              <Toggle $w={23} $h={22} $on><Icon><path d="M2 6l4-4 9 1-4 5 4 5H3l-2-3z" fill="#e2ca3c" stroke="#c7a91b" /></Icon></Toggle>
              <VLine $h={18} $l={2} />
              <Toggle $w={23} $h={22} $on $l={3}><Icon><path d="M2 2l11 11" stroke="#3f7fc4" strokeWidth="1.300" /><circle cx="2" cy="2" r="1.500" fill="#fff" stroke="#3f7fc4" /><circle cx="13" cy="13" r="1.500" fill="#fff" stroke="#3f7fc4" /></Icon></Toggle>
              <Toggle $w={23} $h={22} $on><Icon><path d="M6 15C6 9 10 6 15 6" stroke="#e55" strokeWidth="1.500" /><path d="M8 15c0-5 3-7 7-7" stroke="#ec4" strokeWidth="1.500" /><path d="M9.500 15c0-3 2-5.500 5.500-5.500" stroke="#5b5" strokeWidth="1.500" /><path d="M11 15c0-2 1-4 4-4" stroke="#b6d" strokeWidth="1.500" /><path d="M1 2l11 10" stroke="#3f7fc4" /></Icon></Toggle>
              <Icon l={3}><path d="M1 1h14v4h-2l-1-2h-2v10l2 1v1H4v-1l2-1V3H4L3 5H1z" fill="#f4f4f4" stroke="#aaa" /></Icon>
              <Slider $l={9} $at={14}><Thumb /></Slider>
              <VLine $h={18} $l={7} />
              <Icon l={7}><text x="1" y="14" fontSize="15" fill="#444" fontWeight="700" fontFamily="Liberation Serif, serif">A</text><circle cx="14" cy="9" r="1" fill="#444" /></Icon>
              <Icon l={5}><text x="1" y="14" fontSize="15" fill="#4a6fd0" fontWeight="700" fontFamily="Liberation Serif, serif">A</text><path d="M0 14.500h13" stroke="#4a6fd0" /><circle cx="15" cy="9" r="1" fill="#4a6fd0" /></Icon>
              <Tah w={71} l={7}>Arial tučné, 32</Tah>
              <Slider $l={8} $at={43}><Thumb /></Slider>
              <BlackSwatch />
              <Icon><path d="M2 2h12v13H2z" fill="#e5edf6" stroke="#8894a8" /><path d="M5 1h6v3H5z" fill="#d9a032" /><path d="M4 7h8M4 10h8" stroke="#9ab" /><path d="M8 7l6 6h-3l1 3-2-1-1-2-1 1z" fill="#fff" stroke="#666" /></Icon>
              <Icon w={9} h={10} l="auto"><path d="M4.500 0L9 5H0zM1 6.500h7v3H1z" fill="#ddd" stroke="#333" /></Icon>
            </GraphBottom>
          </GraphBody>
        </Column>
        <Column>
          <Dock $h={103}>
            <DockHead>
              <DockTab $w={66} $on><Tah b w={42} s={11.5}>Kontext</Tah><Close l={7} /></DockTab>
              <DockFill><Minimize /></DockFill>
            </DockHead>
            <ContextBody>
              <div>
                <ContextRow><Tah b w={28}>Uzly:</Tah><Tah w={12} l={18}>77</Tah></ContextRow>
                <ContextRow><Tah b w={38}>Hrany:</Tah><Tah w={18} l={8}>254</Tah></ContextRow>
                <ContextRow><Tah w={66}>Neřízený graf</Tah></ContextRow>
              </div>
              <Icon><circle cx="8" cy="8" r="7.500" fill="#b6e59a" stroke="#3c9a2c" /><path d="M8 8l7-1c0 2 0 4-1 5z" fill="#2a9018" /></Icon>
            </ContextBody>
          </Dock>
          <Dock $h={826} $white>
            <DockHead>
              <DockTab $w={75} $on><Tah b w={50} s={11.5}>Statistiky</Tah><Close l={7} /></DockTab>
              <DockTab $w={52}><Tah b w={27} s={11.5}>Filtry</Tah></DockTab>
              <DockFill><Minimize /></DockFill>
            </DockHead>
            <SettingsRow><Tah w={49}>Nastavení</Tah></SettingsRow>
            {stats.map(([title, w, rows]) => (
              <React.Fragment key={title}>
                <Section>
                  <Icon w={9} h={9}><rect x=".5" y=".5" width="8" height="8" fill="#f4f4f4" stroke="#888" /><path d="M2 3.500h5L4.500 6z" fill="#333" /></Icon>
                  <Tah b w={w} l={5} s={11.5}>{title}</Tah>
                </Section>
                {rows.map(([t, rw]) => (
                  <StatRow key={t}>
                    <Tah w={rw}>{t}</Tah>
                    <StatRun><Tah w={34}>Spustit</Tah></StatRun>
                    <StatHelp><HelpDot s={9} /></StatHelp>
                  </StatRow>
                ))}
              </React.Fragment>
            ))}
          </Dock>
        </Column>
      </WorkArea>
      <GephiStatus>
        <Icon w={16} h={14}><rect x=".5" y=".5" width="15" height="12" rx="1" fill="#fdfdfd" stroke="#c9c9c9" /><path d="M1 1.500h14" stroke="#ddd" strokeWidth="2" /><path d="M13 1.500h2" stroke="#d88" /></Icon>
        <Tah w={61} l={7}>Workspace 1</Tah>
        <Icon w={6} h={8} l={9}><path d="M6 0v8L0 4z" fill="#222" /></Icon>
        <Icon w={7} h={8} l={10}><path d="M0 0v8l7-4z" fill="#888" /></Icon>
        <Icon w={15} h={15} vb="0 0 16 16" l={20}><circle cx="8" cy="7.500" r="7" fill="#4a9ad4" /><path d="M3 3c4-2 6 1 4 3s-2 4-4 3-2-4 0-6zM10 2c3 1 4 5 3 7-2-1-4-4-3-7z" fill="#58b048" /><path d="M1 8h6l-2 2c2 3 6 2 7-1l3 2c-2 5-9 6-12 1l-2 2z" fill="#eccb62" stroke="#9a7622" strokeWidth=".7" /></Icon>
      </GephiStatus>
    </GephiWindow>
  );
}

/* ---------- diagram editor behind the file manager ---------- */

const Editor = styled.div`
  display: flex;
  flex-direction: column;
  height: 1040px;
  background: #f0f0f0;
`;
const EditorTitle = styled.div`
  display: flex;
  justify-content: flex-end;
  flex: none;
  height: 23px;
  background: #ebebeb;
  border-bottom: 1px solid #dcdcdc;
`;
const EditorBody = styled.div`
  display: grid;
  grid-template-columns: 1671px 200px;
  column-gap: 3px;
  height: 937px;
  margin: 52px 0 0 44px;
`;
const Sheet = styled.div`
  display: grid;
  grid-template: 21px 1fr / 21px 1fr;
  border: 1px solid #a5a5a5;
  border-top-color: #999;
`;
const RulerTop = styled.div`
  grid-column: 1 / 3;
  border-bottom: 1px solid #999;
  overflow: hidden;
`;
const RulerLeft = styled.div`
  border-right: 1px solid #999;
  overflow: hidden;
`;
const Paper = styled.div`
  background: #fff;
  border: 1px solid #d4e3ef;
`;
const EditorStatus = styled.div`
  display: flex;
  align-items: center;
  height: 25px;
  margin-top: 3px;
  padding-left: 3px;
  border-top: 1px solid #d6d6d6;
`;
const Properties = styled.div`
  display: flex;
  flex-direction: column;
  border: 1px solid #a5a5a5;
`;
const PropertiesHead = styled.div`
  display: flex;
  align-items: center;
  justify-content: space-between;
  height: 19px;
  padding: 0 9px 0 4px;
  background: #bbcef5;
`;
const PropGroup = styled.div<{ $h: number; $t: number }>`
  height: ${(p) => p.$h}px;
  margin: ${(p) => p.$t}px 6px 0 4px;
  border: 1px solid #a0a0a0;
  border-radius: 5px;
  overflow: hidden;
`;
const PropGroupHead = styled.div`
  display: flex;
  align-items: center;
  height: 18px;
  padding-left: 6px;
  background: #d2d2d2;
  border-bottom: 1px solid #ddd;
`;
const PropRow = styled.div<{ $t: number; $l?: number; $gap?: number }>`
  display: flex;
  align-items: center;
  gap: ${(p) => p.$gap ?? 7}px;
  margin: ${(p) => p.$t}px 0 0 ${(p) => p.$l ?? 7}px;
`;
const Glass = styled.div<{ $w: number; $l?: number }>`
  display: flex;
  flex: none;
  align-items: center;
  justify-content: space-evenly;
  width: ${(p) => p.$w}px;
  height: 21px;
  margin-left: ${(p) => p.$l || 0}px;
  border: 1px solid #8fb6d8;
  border-radius: 3px;
  background: linear-gradient(#e3effb 0, #d9e8f8 45%, #bcd3f0 50%, #d3e8fb);
  overflow: hidden;
`;
const GlassCell = styled.div<{ $on?: boolean }>`
  display: flex;
  flex: 1;
  align-items: center;
  justify-content: center;
  align-self: stretch;
  border-right: 1px solid #8fb6d8;
  background: ${(p) => (p.$on ? "#ffe75e" : "transparent")};
  &:last-child { border-right: 0; }
`;
const Field = styled.div<{ $w: number }>`
  display: flex;
  align-items: center;
  justify-content: space-between;
  width: ${(p) => p.$w}px;
  height: 21px;
  padding: 0 3px;
  border: 1px solid #d4d4d4;
  background: #fff;
`;
const TextArea = styled.div`
  height: 55px;
  margin: 4px 3px 0;
  border: 1px solid #666;
`;
const Preview = styled.div`
  height: 96px;
  margin: auto 2px 2px;
  border: 1px solid #555;
  background: #fff;
`;

const Grid9 = () => (
  <Icon><path d="M.7.7h14.600v14.600H.7zM5.500.7v14.600M10.500.7v14.600M.7 5.500h14.600M.7 10.500h14.600" stroke="#1e6cb0" strokeWidth="1.400" fill="#fff" /><path d="M2 2h3v3H2zM11 2h3v3h-3zM6.500 6.500h3v3h-3zM2 11h3v3H2zM11 11h3v3h-3z" fill="#7cc0f0" /></Icon>
);
const Lines = ({ rows }: { rows: [number, number][] }) => (
  <Icon>{rows.map(([x, w], i) => <path key={i} d={`M${x} ${2 + i * 2}h${w}`} stroke="#12304f" strokeWidth="1.200" />)}</Icon>
);
const Box = ({ y }: { y: number }) => (
  <Icon><rect x="2.500" y="1.500" width="11" height="13" fill="#fff" stroke="#33475c" /><path d="M0 1.500h16M0 14.500h16" stroke="#33475c" strokeDasharray="2 12" /><path d={`M5 ${y}h6M5 ${y + 2}h6`} stroke="#4a86c8" /></Icon>
);
const Glyph = ({ t, attrs }: { t: string; attrs: React.SVGProps<SVGTextElement> }) => (
  <Icon><text x="8" y="13" textAnchor="middle" fontSize="15" fill="#1c1c1c" fontFamily="Liberation Sans, sans-serif" {...attrs}>{t}</text></Icon>
);

const TopRuler = () => (
  <Svg width={1669} height={20} viewBox="0 0 1669 20">
    {Array.from({ length: 50 }, (_, i) => 1660 - i * 10).map((x) => <path key={x} d={`M${x + 0.5} 15v5`} stroke="#a5a5a5" />)}
    {[1200, 1300, 1400, 1500, 1600].map((n) => (
      <g key={n}>
        <path d={`M${n + 20.5} 0v20`} stroke="#a0a0a0" />
        <text x={n + 26} y="12" fontSize="11" textLength="24" fill="#a3a3a3" fontFamily="Liberation Sans, sans-serif">{n}</text>
      </g>
    ))}
  </Svg>
);

const LeftRuler = () => (
  <Svg width={20} height={914} viewBox="0 97 20 914">
    {Array.from({ length: 40 }, (_, i) => 1006 - i * 10).map((y) => <path key={y} d={`M15 ${y + 0.5}h5`} stroke="#a5a5a5" />)}
    {[600, 700, 800, 900].map((n) => (
      <g key={n}>
        <path d={`M0 ${n + 96.5}h20`} stroke="#a0a0a0" />
        <text transform={`translate(11.5 ${n + 119}) rotate(-90)`} fontSize="11" textLength="18" fill="#a3a3a3" fontFamily="Liberation Sans, sans-serif">{n}</text>
      </g>
    ))}
  </Svg>
);

function DiagramEditor() {
  const head = (t: string, w: number) => <PropGroupHead><Label f={ARIAL} s={12} w={w}>{t}</Label></PropGroupHead>;
  return (
    <Editor>
      <EditorTitle>
        <WindowButtons>
          <Icon w={8} h={8}><path d="M0 8.500h8" stroke="#222" strokeWidth="2" /></Icon>
          <Icon w={11} h={10} l={8}><rect x=".7" y="3" width="7" height="6.500" stroke="#222" strokeWidth="1.300" /><path d="M3 1h7v7" stroke="#222" strokeWidth="1.300" /></Icon>
          <CloseButton $bg="#bcbcbc"><Icon w={8} h={8}><path d="M0 0l8 8M8 0L0 8" stroke="#fff" strokeWidth="1.600" /></Icon></CloseButton>
        </WindowButtons>
      </EditorTitle>
      <EditorBody>
        <Sheet>
          <RulerTop><TopRuler /></RulerTop>
          <RulerLeft><LeftRuler /></RulerLeft>
          <Paper />
        </Sheet>
        <Properties>
          <PropertiesHead>
            <Label f={ARIAL} s={12} w={46}>Properties</Label>
            <Icon w={8} h={8}><path d="M0 0l8 8M8 0L0 8" stroke="#444" strokeWidth="1.800" /></Icon>
          </PropertiesHead>
          <PropGroup $h={81} $t={3}>
            {head("Font", 22)}
            <PropRow $t={5} $l={5} $gap={5}>
              <Field $w={117}><Label f={ARIAL} w={22}>Arial</Label><Chevron c="#b4b4b4" /></Field>
              <Field $w={50}><Label f={ARIAL} w={12} c="#777">12</Label><Chevron c="#b4b4b4" /></Field>
            </PropRow>
            <PropRow $t={8} $l={6}>
              <Glass $w={79}>
                <GlassCell><Glyph t="b" attrs={{ fontWeight: 700 }} /></GlassCell>
                <GlassCell><Glyph t="i" attrs={{ fontStyle: "italic", fontWeight: 700 }} /></GlassCell>
                <GlassCell><Glyph t="u" attrs={{ textDecoration: "underline" }} /></GlassCell>
                <GlassCell><Glyph t="s" attrs={{ textDecoration: "line-through" }} /></GlassCell>
              </Glass>
              <Glass $w={36} $l={5}><Icon><text x="2" y="11" fontSize="14" fontWeight="700" fill="#333" fontFamily="Liberation Serif, serif">A</text><path d="M0 14h14" stroke="#aaa" strokeWidth="3" /></Icon><Caret /></Glass>
              <Glass $w={36}><Grid9 /><Caret /></Glass>
            </PropRow>
          </PropGroup>
          <PropGroup $h={81} $t={7}>
            {head("Line", 21)}
            <PropRow $t={6}><Glass $w={123}><Icon w={101} h={3}><path d="M0 1.500h101" stroke="#4179b8" strokeWidth="2.500" /></Icon><Caret /></Glass></PropRow>
            <PropRow $t={8}>
              <Glass $w={36}><Icon><path d="M1 3h14M1 7h14" stroke="#3a6fb0" strokeWidth="2" /><path d="M1 12h14" stroke="#3a6fb0" strokeWidth="4" /></Icon><Caret /></Glass>
              <Glass $w={36}><Icon><path d="M2 5h12M5 2L2 5l3 3M1 12h12M10 9l3 3-3 3" stroke="#3a7bc0" strokeWidth="1.500" /></Icon><Caret /></Glass>
              <Glass $w={36}><Icon><path d="M2 1h9M2 1v10h4" stroke="#33c" strokeWidth="1.300" /><path d="M6 11l1-4 6-7 3 2-6 7z" fill="#f1c531" stroke="#975" strokeWidth=".7" /><path d="M1 14.500h14" stroke="#aaa" strokeWidth="3" /></Icon><Caret /></Glass>
              <Glass $w={36}><Grid9 /><Caret /></Glass>
            </PropRow>
          </PropGroup>
          <PropGroup $h={59} $t={7}>
            {head("Fill", 15)}
            <PropRow $t={11}>
              <Glass $w={36}><Icon><path d="M7 3l7 3-4 6-6-3z" fill="#b9805c" stroke="#7a4d33" /><path d="M8 0v5" stroke="#553" strokeWidth="1.500" /><path d="M2 11c-2-5 2-7 5-7" stroke="#4a5fd0" strokeWidth="2" /><path d="M1 14.500h13" stroke="#aaa" strokeWidth="3" /></Icon><Caret /></Glass>
              <Glass $w={36}><Grid9 /><Caret /></Glass>
              <Glass $w={36}><Icon><rect x=".5" y="1.500" width="15" height="13" fill="#fff" stroke="#555" /><path d="M2 3h12v6H2z" fill="#f0a21c" /><path d="M2 8h12v5H2z" fill="#7c3d0b" /><path d="M8 5h4v2H8z" fill="#fff3b0" /></Icon></Glass>
            </PropRow>
          </PropGroup>
          <PropGroup $h={109} $t={7}>
            {head("Text", 22)}
            <TextArea />
            <PropRow $t={6} $l={4}>
              <Glass $w={60}>
                <GlassCell $on><Lines rows={[[1, 14], [1, 9], [1, 13], [1, 8], [1, 14], [1, 9], [1, 13]]} /></GlassCell>
                <GlassCell><Lines rows={[[4, 8], [2, 12], [5, 6], [1, 14], [4, 8], [2, 12], [5, 6]]} /></GlassCell>
                <GlassCell><Lines rows={[[1, 14], [6, 9], [2, 13], [7, 8], [1, 14], [6, 9], [2, 13]]} /></GlassCell>
              </Glass>
              <Glass $w={60} $l={2}>
                <GlassCell><Box y={3.5} /></GlassCell>
                <GlassCell $on><Box y={6.5} /></GlassCell>
                <GlassCell><Box y={10.5} /></GlassCell>
              </Glass>
              <Glass $w={36} $l={5}><Icon><rect x="1.500" y="1.500" width="12" height="13" fill="#fff" stroke="#8a9bb0" /><path d="M5 1v14M10 1v14M1 5h13M1 12h13" stroke="#8aa7c8" /></Icon><Caret /></Glass>
            </PropRow>
          </PropGroup>
          <Preview />
        </Properties>
      </EditorBody>
      <EditorStatus>
        <Icon w={17} h={14}><path d="M3 0h11v5H3z" fill="#9aa3c0" /><rect y="3" width="17" height="7" rx="2" fill="#8288a4" /><path d="M4 8h9v6H4z" fill="#fff" stroke="#558" /><path d="M5 12.500h7" stroke="#2a8fe0" strokeWidth="2" /><path d="M1 8h3" stroke="#3c3" strokeWidth="2" /></Icon>
        <VLine $h={19} $l={101} $c="#999" />
        <Icon w={16} h={16} l={5}><rect x="6.500" y="5.500" width="9" height="10" stroke="#333" strokeDasharray="1 1" /><path d="M6.500 0v5M8 2.500h6M12 .5l2 2-2 2M15.500 0v5M0 5.500h5M2.500 7v7M.5 12l2 2 2-2M0 15.500h5" stroke="#333" /></Icon>
        <VLine $h={19} $l={122} $c="#999" />
        <Icon w={16} h={16} l={5}><rect x="4.500" y="4.500" width="10" height="11" stroke="#333" strokeDasharray="1 1" /><path d="M4.500 0v8M0 4.500h8" stroke="#333" strokeDasharray="3 1" /></Icon>
      </EditorStatus>
    </Editor>
  );
}

/* ---------- file manager ---------- */

const ExplorerWindow = styled.div`
  position: absolute;
  left: 0;
  top: 1px;
  display: flex;
  flex-direction: column;
  width: 1252px;
  height: 680px;
  padding: 0 7px 8px 0;
  background: #ebebeb;
  border: 1px solid #cfcfcf;
  border-left: 0;
`;
const ExTitle = styled.div`
  display: grid;
  grid-template-columns: 120px 1fr 120px;
  align-items: center;
  justify-items: center;
  flex: none;
  height: 29px;
`;
const QuickAccess = styled.div`
  display: flex;
  align-items: center;
  justify-self: start;
  overflow: hidden;
`;
const ExButtons = styled.div`
  display: flex;
  align-self: start;
  align-items: center;
  justify-self: end;
`;
const ExTabs = styled.div`
  display: flex;
  align-items: center;
  flex: none;
  height: 25px;
  background: #fff;
  border: 1px solid #dadbdc;
  border-left: 0;
`;
const FileTab = styled.div`
  display: flex;
  align-items: center;
  width: 47px;
  height: 23px;
  padding-left: 1px;
  background: #1979ca;
`;
const HomeTab = styled.div`
  display: flex;
  align-items: center;
  width: 58px;
  height: 25px;
  padding-left: 13px;
  background: #f5f6f7;
  border-right: 1px solid #dadbdc;
`;
const Ribbon = styled.div`
  display: flex;
  flex: none;
  height: 92px;
  background: #f5f6f7;
  border-right: 1px solid #dadbdc;
  border-bottom: 1px solid #dadbdc;
`;
const RibbonGroup = styled.div<{ $w: number }>`
  display: flex;
  flex-direction: column;
  width: ${(p) => p.$w}px;
  margin: 2px 0 3px;
  border-right: 1px solid #e0e1e3;
`;
const RibbonItems = styled.div<{ $pl: number }>`
  display: flex;
  height: 71px;
  padding-left: ${(p) => p.$pl}px;
`;
const RibbonCaption = styled.div<{ $pr: number }>`
  display: flex;
  justify-content: center;
  align-items: center;
  height: 17px;
  padding-right: ${(p) => p.$pr}px;
`;
const BigButton = styled.div<{ $w: number }>`
  display: flex;
  flex-direction: column;
  align-items: center;
  width: ${(p) => p.$w}px;
  padding-top: 5px;
`;
const BigLine = styled.div`
  display: flex;
  align-items: center;
  height: 13px;
`;
const BigIcon = styled.div`
  height: 34px;
`;
const SmallStack = styled.div<{ $l: number }>`
  margin: 2px 0 0 ${(p) => p.$l}px;
`;
const SmallButton = styled.div`
  display: flex;
  align-items: center;
  gap: 3px;
  height: 22px;
`;
const Address = styled.div`
  display: flex;
  align-items: center;
  flex: none;
  height: 37px;
  background: #fff;
  border-right: 1px solid #dadbdc;
`;
const Crumbs = styled.div`
  display: flex;
  align-items: center;
  width: 919px;
  height: 22px;
  margin-left: 9px;
  padding-left: 3px;
  border: 1px solid #d9d9d9;
`;
const Crumb = styled.div`
  display: flex;
  align-items: center;
  margin-left: 9px;
`;
const CrumbEnd = styled.div`
  display: flex;
  align-items: center;
  height: 20px;
  margin-left: auto;
  padding-right: 8px;
`;
const SearchBox = styled.div`
  display: flex;
  align-items: center;
  justify-content: space-between;
  width: 202px;
  height: 22px;
  margin-left: 12px;
  padding: 0 8px;
  border: 1px solid #d9d9d9;
`;
const ExBody = styled.div`
  display: grid;
  grid-template-columns: 277px 17px 1fr;
  flex: none;
  height: 465px;
  background: #fff;
  border-right: 1px solid #dadbdc;
`;
const NavItem = styled.div<{ $root?: boolean; $on?: boolean }>`
  display: flex;
  align-items: center;
  gap: ${(p) => (p.$root ? 6 : 5)}px;
  height: 21px;
  padding-left: ${(p) => (p.$root ? 10 : 21)}px;
  border: 1px solid ${(p) => (p.$on ? "#dedede" : "transparent")};
  border-left: 0;
  background: ${(p) => (p.$on ? "#f7f7f7" : "transparent")};
`;
const NavSpace = styled.div`
  height: 21px;
`;
const Scroll = styled.div`
  display: flex;
  flex-direction: column;
  align-items: center;
  justify-content: space-between;
  width: 16px;
  margin-left: 1px;
  padding: 6px 0;
  background: #f0f0f0;
`;
const ScrollThumb = styled.div`
  width: 16px;
  height: 323px;
  margin-top: 79px;
  background: #cdcdcd;
`;
const Files = styled.div`
  margin-left: 1px;
  padding-left: 15px;
  border-left: 1px solid #f0f0f0;
`;
const FileGrid = styled.div<{ $head?: boolean; $on?: boolean }>`
  display: grid;
  grid-template-columns: 257px 120px 120px 77px;
  align-items: center;
  width: 575px;
  height: ${(p) => (p.$head ? 23 : 21)}px;
  margin-bottom: ${(p) => (p.$head ? 9 : 0)}px;
  box-shadow: ${(p) => (p.$on ? "inset 0 0 0 1px #dadada" : "none")};
  background: ${(p) => (p.$on ? "#f7f7f7" : "transparent")};
`;
const HeadCell = styled.div`
  display: flex;
  align-items: center;
  align-self: stretch;
  padding: 3px 0 0 6px;
  border-left: 1px solid #e3eaf3;
  &:first-child { border-left: 0; padding-left: 3px; justify-content: flex-start; }
  &:last-child { border-right: 1px solid #e3eaf3; width: 81px; }
`;
const FileCell = styled.div<{ $name?: boolean; $right?: boolean }>`
  display: flex;
  align-items: center;
  gap: 3px;
  padding: 0 4px 0 ${(p) => (p.$name ? 5 : 7)}px;
  justify-content: ${(p) => (p.$right ? "flex-end" : "flex-start")};
`;
const SortArrow = styled.div`
  margin: -20px 0 0 88px;
`;
const ExStatus = styled.div`
  display: flex;
  align-items: center;
  flex: 1;
  padding: 1px 7px 0 5px;
  background: #fff;
  border-right: 1px solid #dadbdc;
  border-bottom: 1px solid #cfcfcf;
`;
const ViewButtons = styled.div`
  display: flex;
  gap: 4px;
  margin-left: auto;
`;

const BigFolder = ({ children }: { children?: ReactNode }) => (
  <Icon w={32} h={32}>
    <path d="M4 2l12-2v29H4z" fill="#e6c568" /><path d="M14 2h8v26h-8z" fill="#dcb550" />
    <path d="M4 2l7 3v26l-7-3z" fill="#fbebb0" stroke="#d9b957" strokeWidth=".6" /><path d="M11 5h8v15h7v8l-15 3z" fill="#f3d882" />{children}
  </Icon>
);
const Pages = ({ x = 0 }: { x?: number }) => (
  <g transform={`translate(${x} 0)`}>
    <path d="M3 1h9l4 4v16H3z" fill="#fff" stroke="#a5a5a5" /><path d="M12 10h9l5 5v15H12z" fill="#fff" stroke="#a5a5a5" /><path d="M5 8h6M5 11h6M5 14h6M15 17h8M15 20h8M15 23h8M15 26h8" stroke="#6ea2dc" />
  </g>
);
const bigIcons = {
  copy: <Icon w={32} h={32}><Pages x={2} /></Icon>,
  paste: <Icon w={32} h={32}><rect x="4" y="3" width="24" height="27" rx="1" fill="#8fa2c4" /><rect x="7" y="6" width="18" height="22" fill="#e9eef6" /><path d="M9 10h14M9 13h14M9 16h14M9 19h14M9 22h14" stroke="#c9d4e5" /><rect x="10" y="1" width="12" height="5" rx="1" fill="#a9b2c0" /></Icon>,
  move: <BigFolder><path d="M14 23l8-7v4h8v7h-8v4z" fill="#2e9be0" stroke="#1b6db0" /></BigFolder>,
  copyTo: <BigFolder><g transform="translate(12 0) scale(.72)"><Pages /></g></BigFolder>,
  remove: <Icon w={32} h={32}><path d="M2 4l5-1 9 10L27 3l3 0-12 13 8 11-4 2-8-11-8 11-4-1 9-13z" fill="#d9281c" /></Icon>,
  rename: <Icon w={32} h={32}><rect x="2" y="9" width="27" height="13" fill="#fff" stroke="#2e6aa8" strokeWidth="1.500" /><rect x="5" y="12" width="13" height="7" fill="#4aa0e8" /><path d="M18 3c3 0 5 1 5 3v20c0 1-2 3-5 3M28 3c-3 0-5 1-5 3v20c0 1 2 3 5 3" stroke="#777" strokeWidth="2.500" /></Icon>,
  folder: <BigFolder />,
  props: <Icon w={32} h={32}><path d="M4 2h15l6 6v22H4z" fill="#fff" stroke="#a5a5a5" /><path d="M19 2v6h6" stroke="#a5a5a5" /><path d="M13 22l3-1 4 5 6-12 4-1-9 18h-3z" fill="#f07a35" /></Icon>,
};
const cells = (fills: boolean[]) => (
  <Icon>{fills.map((on, i) => <rect key={i} x={1.5 + (i % 2) * 7.5} y={1.5 + Math.floor(i / 2) * 7.5} width="5" height="5" fill="#fff" stroke={on ? "#3b93e3" : "#999"} strokeWidth={on ? 2.4 : 1} />)}</Icon>
);
const smallIcons = {
  cut: <Icon><path d="M4 1l5 10M12 1L7 11" stroke="#8a96a8" strokeWidth="1.700" /><circle cx="5" cy="13" r="2" stroke="#2d86d0" strokeWidth="1.600" /><circle cx="11" cy="13" r="2" stroke="#2d86d0" strokeWidth="1.600" /></Icon>,
  path: <Icon><rect x=".5" y="2.500" width="15" height="11" rx="1" fill="#b7dcf8" stroke="#2d74b8" /><path d="M3 5l1.500 4L6 6l1.500 4M9 10h1M11 10h1M13 10h1" stroke="#123" /></Icon>,
  shortcut: <Icon><rect x="2.500" y="1.500" width="11" height="13" fill="#dfe5ee" stroke="#8fa2c4" strokeWidth="1.500" /><path d="M6 12c0-4 2-5 4-5M7 6h4v4" stroke="#7089b0" strokeWidth="1.500" /></Icon>,
  item: <Icon><rect x=".5" y=".5" width="13" height="11" fill="#cfe5f7" stroke="#6fa5d0" strokeDasharray="2 1" /><path d="M6 4h8l2 2v10H6z" fill="#fff" stroke="#999" /><path d="M8 8h6M8 11h6" stroke="#9bc" /></Icon>,
  easy: <Icon><path d="M4 1h8l3 3v11H4z" fill="#fff" stroke="#999" /><path d="M0 5h9M2 8h7M0 11h6" stroke="#2d80d0" strokeWidth="1.600" /></Icon>,
  pdf: <Icon><rect width="16" height="15" fill="#c81414" /><path d="M3 12c5-3 5-9 4-9s0 5 6 7c-3-1-6 0-10 2z" stroke="#fff" /></Icon>,
  edit: <Icon><path d="M2 1h9l3 3v11H2z" fill="#e3ebf6" stroke="#8fa2c4" /><path d="M6 13l7-10 2 2-7 9z" fill="#b5c4dc" stroke="#7089b0" strokeWidth=".7" /></Icon>,
  history: <Icon><path d="M0 0h8l2 3v9H0z" fill="#f4d66b" /><circle cx="10.500" cy="10.500" r="5" fill="#e8eef2" stroke="#8796a4" /><path d="M10.500 7v4h3" stroke="#456" /><path d="M9 4v3c-2 0-3 2-2 5L1 8l5-5z" fill="#35b035" stroke="#1b7f1b" strokeWidth=".6" /></Icon>,
  all: cells([true, true, true, true]),
  none: cells([false, false, false, false]),
  invert: cells([false, true, true, false]),
};

const Arrow = ({ l }: { l?: number }) => <Icon w={4} h={7} l={l}><path d="M0 0l4 3.500L0 7z" fill="#777" /></Icon>;

function Big({ icon, w, a, aw, b, bw, caret, c = "#333" }: { icon: ReactNode; w: number; a: string; aw: number; b?: string; bw?: number; caret?: boolean; c?: string }) {
  return (
    <BigButton $w={w}>
      <BigIcon>{icon}</BigIcon>
      <BigLine><Label w={aw} c={c}>{a}</Label></BigLine>
      <BigLine>{b && <Label w={bw} c={c}>{b}</Label>}{caret && <Caret l={b ? 4 : 0} />}</BigLine>
    </BigButton>
  );
}
function Small({ icon, t, w, caret, c = "#333" }: { icon: ReactNode; t: string; w: number; caret?: boolean; c?: string }) {
  return <SmallButton>{icon}<Label w={w} c={c}>{t}</Label>{caret && <Caret l={1} />}</SmallButton>;
}
function Group({ w, pl, name, nw, pr = 0, children }: { w: number; pl: number; name: string; nw: number; pr?: number; children: ReactNode }) {
  return (
    <RibbonGroup $w={w}>
      <RibbonItems $pl={pl}>{children}</RibbonItems>
      <RibbonCaption $pr={pr}><Label w={nw} c="#8c8c8c">{name}</Label></RibbonCaption>
    </RibbonGroup>
  );
}

const crumbs: [string, number][] = [
  ["Tento počítač", 73], ["DATA (D:)", 53], ["Dokumenty", 62], ["Do_skoly", 47], ["Bc", 13], ["semestr6", 48], ["Bakalarka", 50], ["TEXT", 27], ["BP-final", 42],
];
const nav: ([string, number, string, boolean?] | null)[] = [
  ["Naposledy navštívené", 115, "recent"], ["Plocha", 36, "desktop"], ["Stažené soubory", 86, "f:down"], ["Disk Google", 63, "f:drive"], ["Development", 71, "f:"],
  ["IDEA_WORKSPACE", 99, "f:"], ["semestr4", 47, "f:"], ["www", 27, "f:"], null, ["Domácí skupina", 85, "group", true], null, ["Tento počítač", 73, "pc", true],
  ["Dokumenty", 62, "f:doc"], ["Hudba", 36, "f:music"], ["Obrázky", 43, "f:image"], ["Plocha", 36, "f:desk"], ["Stažené soubory", 86, "f:down"], ["Videa", 29, "f:video"],
  ["OS (C:)", 37, "osdrive"], ["DATA (D:)", 53, "data"], null, ["Síť", 14, "net", true],
];
const files: [ReactNode, string, number, string, string, number, string, number][] = [
  [<Folder />, "latex", 24, "30. 4. 2013 17:41", "Složka souborů", 80, "", 0],
  [<Folder />, "Zadani BP", 53, "30. 4. 2013 17:41", "Složka souborů", 80, "", 0],
  [<Pdf />, "cokrtvac-thesis-2011.pdf", 130, "25. 5. 2011 18:35", "Soubor PDF", 62, "1 207 kB", 43],
  [<Zip />, "latex.zip", 42, "26. 5. 2011 23:40", "Soubor ZIP", 57, "653 kB", 34],
  [<Pdf />, "zadani.pdf", 54, "25. 5. 2011 18:48", "Soubor PDF", 62, "7 037 kB", 43],
];

function Explorer() {
  return (
    <ExplorerWindow>
      <ExTitle>
        <QuickAccess>
          <Folder w={12} l={-7} />
          <VLine $h={12} $l={9} $c="#999" />
          <Icon l={10}><path d="M1.500.5h8l3 3v12h-11z" fill="#fff" stroke="#999" /><path d="M5 10l2-1 2 3 4-6 2-1-5 10H8z" fill="#f07a35" /></Icon>
          <Folder l={5} />
          <Icon w={7} h={7} l={7}><path d="M0 .5h7" stroke="#222" /><path d="M0 3h7L3.500 7z" fill="#222" /></Icon>
          <VLine $h={12} $l={10} $c="#999" />
        </QuickAccess>
        <Label w={51} s={14.5} c="#444" l={-16}>BP-final</Label>
        <ExButtons>
          <Icon w={8} h={10}><path d="M0 8h8" stroke="#222" strokeWidth="2" /></Icon>
          <Icon w={11} h={9} l={18}><rect x=".8" y=".8" width="9.400" height="7.400" stroke="#222" strokeWidth="1.600" /></Icon>
          <CloseButton $bg="#bcbcbc" $h={20} $l={7}><Icon w={8} h={8}><path d="M0 0l8 8M8 0L0 8" stroke="#fff" strokeWidth="1.600" /></Icon></CloseButton>
        </ExButtons>
      </ExTitle>
      <ExTabs>
        <FileTab><Label w={37} c="#fff">Soubor</Label></FileTab>
        <HomeTab><Label w={31} c="#333">Domů</Label></HomeTab>
        <Label w={36} l={15} c="#333">Sdílení</Label>
        <Label w={52} l={28} c="#333">Zobrazení</Label>
        <Chevron up c="#888" l={971} />
        <Icon w={14} h={14} l={11}><circle cx="7" cy="7" r="7" fill="#1979ca" /><text x="7" y="11" fontSize="11" fontWeight="700" textAnchor="middle" fill="#fff" fontFamily="Liberation Sans, sans-serif">?</text></Icon>
      </ExTabs>
      <Ribbon>
        <Group w={205} pl={0} name="Schránka" nw={47} pr={9}>
          <Big icon={bigIcons.copy} w={47} a="Kopírovat" aw={49} />
          <Big icon={bigIcons.paste} w={49} a="Vložit" aw={29} c="#999" />
          <SmallStack $l={0}>
            <Small icon={smallIcons.cut} t="Vyjmout" w={42} />
            <Small icon={smallIcons.path} t="Kopírovat cestu" w={79} />
            <Small icon={smallIcons.shortcut} t="Vložit zástupce" w={77} c="#999" />
          </SmallStack>
        </Group>
        <Group w={253} pl={5} name="Uspořádat" nw={54} pr={2}>
          <Big icon={bigIcons.move} w={56} a="Přesunout" aw={53} b="do" bw={13} caret />
          <Big icon={bigIcons.copyTo} w={56} a="Kopírovat" aw={49} b="do" bw={13} caret />
          <VLine $h={55} $l={3} $t={7} $c="#e0e1e3" />
          <Big icon={bigIcons.remove} w={60} a="Odstranit" aw={49} caret />
          <Big icon={bigIcons.rename} w={64} a="Přejmenovat" aw={63} />
        </Group>
        <Group w={166} pl={3} name="Nový" nw={25} pr={1}>
          <Big icon={bigIcons.folder} w={42} a="Nová" aw={26} b="složka" bw={32} />
          <SmallStack $l={4}>
            <Small icon={smallIcons.item} t="Nová položka" w={70} caret />
            <Small icon={smallIcons.easy} t="Snadný přístup" w={78} caret />
          </SmallStack>
        </Group>
        <Group w={138} pl={4} name="Otevřít" nw={34} pr={2}>
          <Big icon={bigIcons.props} w={56} a="Vlastnosti" aw={51} caret />
          <SmallStack $l={3}>
            <Small icon={smallIcons.pdf} t="Otevřít" w={36} caret />
            <Small icon={smallIcons.edit} t="Upravit" w={37} c="#999" />
            <Small icon={smallIcons.history} t="Historie" w={40} />
          </SmallStack>
        </Group>
        <Group w={118} pl={7} name="Vybrat" nw={33} pr={2}>
          <SmallStack $l={0}>
            <Small icon={smallIcons.all} t="Vybrat vše" w={52} />
            <Small icon={smallIcons.none} t="Zrušit výběr" w={59} />
            <Small icon={smallIcons.invert} t="Invertovat výběr" w={81} />
          </SmallStack>
        </Group>
      </Ribbon>
      <Address>
        <Icon w={19} h={19} l={1}><circle cx="9.500" cy="9.500" r="8.700" stroke="#666" strokeWidth="1.300" /><path d="M14 9.500H5.500M9 5.500l-4 4 4 4" stroke="#555" strokeWidth="2" /></Icon>
        <Icon w={19} h={19} l={10}><circle cx="9.500" cy="9.500" r="8.700" stroke="#ccc" /><path d="M5 9.500h8.500M10 5.500l4 4-4 4" stroke="#ccc" strokeWidth="2" /></Icon>
        <Caret c="#777" l={11} w={8} />
        <Icon w={9} h={12} l={14}><path d="M4.500 12V1.500M1 5.500l3.500-4 3.500 4" stroke="#666" strokeWidth="1.700" /></Icon>
        <Crumbs>
          <Folder />
          {crumbs.map(([t, w], i) => <Crumb key={t}><Arrow l={i === 0 ? -2 : 0} /><Label w={w} l={10}>{t}</Label></Crumb>)}
          <CrumbEnd>
            <Chevron /><VLine $h={20} $l={5} $c="#d9d9d9" />
            <Icon w={11} h={11} l={7}><path d="M9.500 5.500a4 4 0 1 1-2-3.500M7 0v3.500h3.500" stroke="#666" strokeWidth="1.400" /></Icon>
          </CrumbEnd>
        </Crumbs>
        <SearchBox>
          <Label w={99} c="#6d6d6d">Prohledat: BP-final</Label>
          <Icon w={11} h={11}><circle cx="7" cy="4" r="3.300" stroke="#666" strokeWidth="1.500" /><path d="M5 6.500L.5 11" stroke="#666" strokeWidth="2" /></Icon>
        </SearchBox>
      </Address>
      <ExBody>
        <div>
          {nav.map((n, i) =>
            n ? (
              <NavItem key={i} $root={n[3]} $on={n[2] === "data"}>
                {n[2].startsWith("f:") ? <Folder kind={n[2].slice(2)} /> : navIcons[n[2]]}
                <Label w={n[1]}>{n[0]}</Label>
              </NavItem>
            ) : <NavSpace key={i} />
          )}
        </div>
        <Scroll>
          <Chevron up />
          <ScrollThumb />
          <Chevron />
        </Scroll>
        <Files>
          <FileGrid $head>
            <HeadCell><Label w={32} c="#4c607a">Název</Label><SortArrow><Icon w={8} h={4}><path d="M4 0l4 4H0z" fill="#6b9fc4" /></Icon></SortArrow></HeadCell>
            <HeadCell><Label w={74} c="#4c607a">Datum změny</Label></HeadCell>
            <HeadCell><Label w={20} c="#4c607a">Typ</Label></HeadCell>
            <HeadCell><Label w={41} c="#4c607a">Velikost</Label></HeadCell>
          </FileGrid>
          {files.map(([icon, name, nw, date, type, tw, size, sw]) => (
            <FileGrid key={name} $on={name.startsWith("cokr")}>
              <FileCell $name>{icon}<Label w={nw}>{name}</Label></FileCell>
              <FileCell><Label w={83} c="#6d6d6d">{date}</Label></FileCell>
              <FileCell><Label w={tw} c="#6d6d6d">{type}</Label></FileCell>
              <FileCell $right>{size && <Label w={sw} c="#6d6d6d">{size}</Label>}</FileCell>
            </FileGrid>
          ))}
        </Files>
      </ExBody>
      <ExStatus>
        <Label w={86} c="#1e395b">Počet položek: 5</Label>
        <VLine $h={11} $l={10} $c="#e6e6e6" />
        <Label w={192} l={10} c="#1e395b">Počet vybraných položek: 1; 1,17 MB</Label>
        <VLine $h={11} $l={10} $c="#e6e6e6" />
        <ViewButtons>
          <Toggle $w={22} $h={20} $on><Icon><rect x="1.500" y="2.500" width="13" height="11" fill="#fff" stroke="#777" /><path d="M3 5h2M3 8h2M3 11h2M6 5h7M6 8h7M6 11h7" stroke="#4a86b8" /></Icon></Toggle>
          <Icon w={14} h={18}><rect x=".5" y="3.500" width="13" height="11" fill="#fff" stroke="#777" /><path d="M2 5h10v6H2z" fill="#4a9ad8" /><path d="M2 11l4-3 6 3z" fill="#3c6e9a" /></Icon>
        </ViewButtons>
      </ExStatus>
    </ExplorerWindow>
  );
}

export default function App() {
  return (
    <>
      <Global />
      <Desktop>
        <Monitor>
          <Gephi />
          <Taskbar tray />
        </Monitor>
        <Monitor>
          <DiagramEditor />
          <Explorer />
          <Taskbar />
        </Monitor>
      </Desktop>
    </>
  );
}
